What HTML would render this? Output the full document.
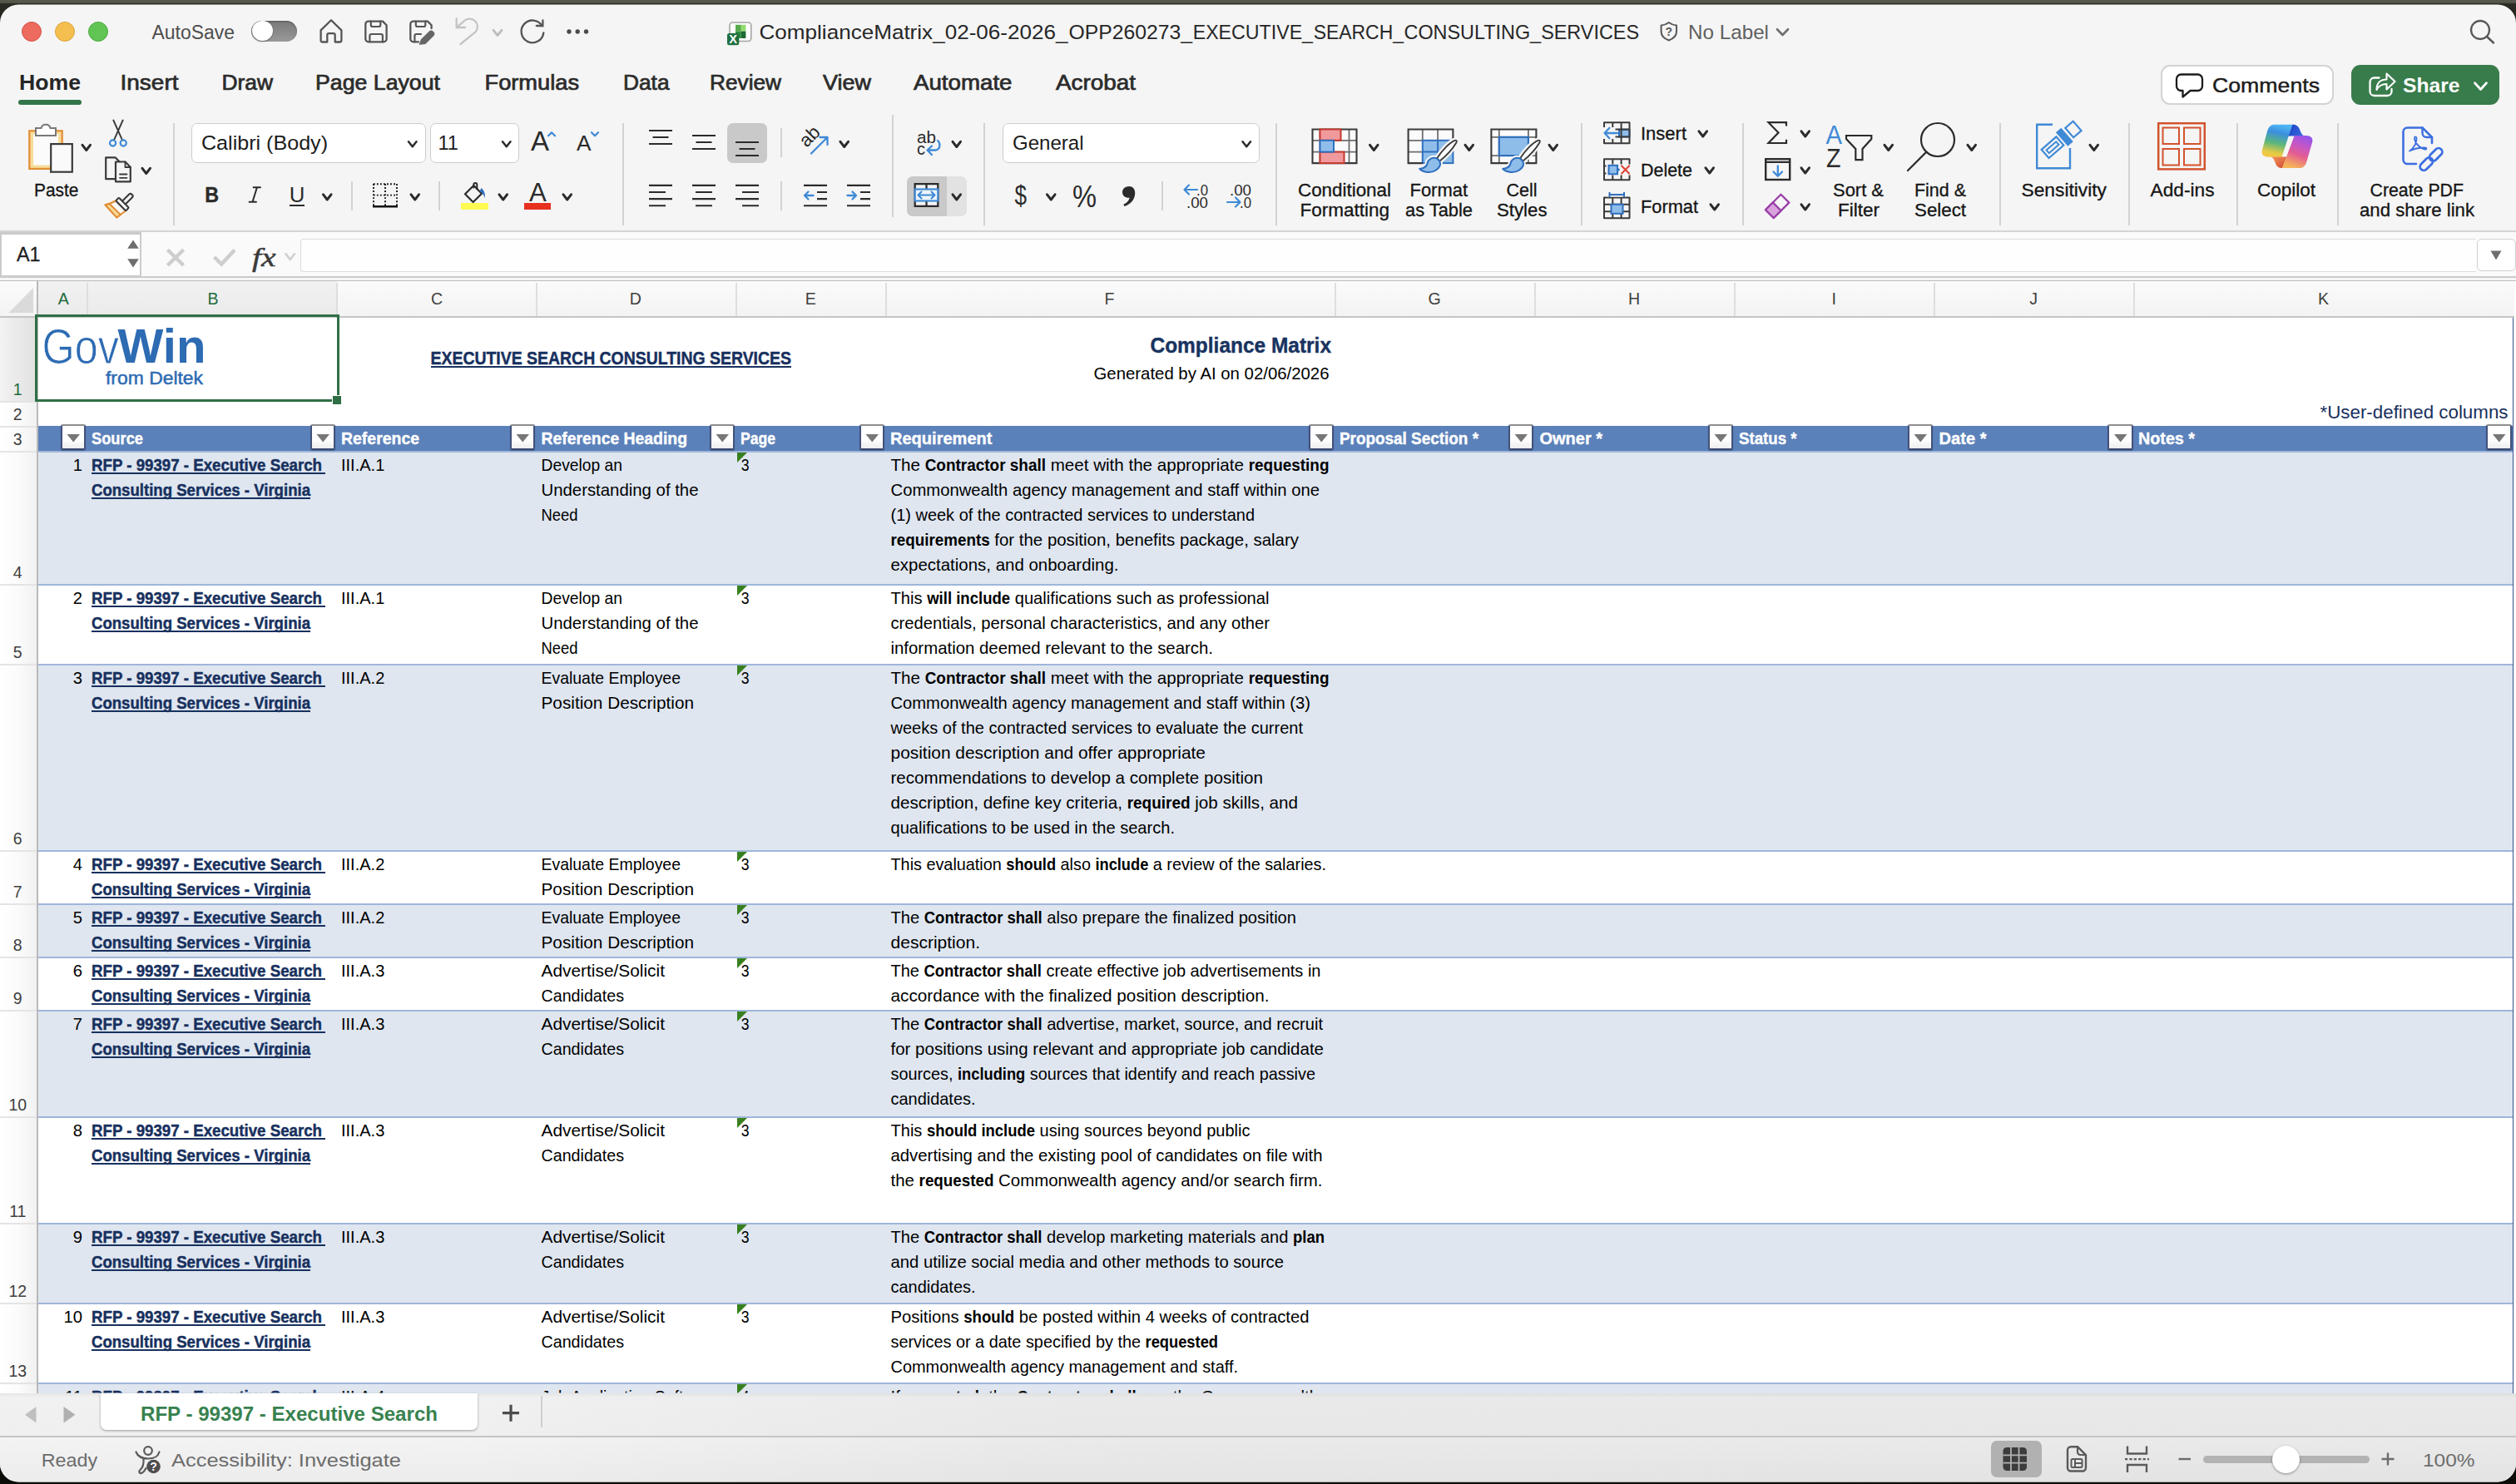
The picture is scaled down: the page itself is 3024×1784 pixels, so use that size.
<!DOCTYPE html>
<html><head><meta charset="utf-8"><title>Excel</title><style>
html,body{margin:0;padding:0}
body{width:3024px;height:1784px;overflow:hidden;position:relative;background:linear-gradient(180deg,#55584a 0px,#55584a 3.2px,#2b2c24 4.6px,#1e2219 30px,#14160f 900px,#0c0d08 1784px);font-family:"Liberation Sans",sans-serif}
#win{position:absolute;left:0;top:0;width:3024px;height:1784px;clip-path:inset(5.5px 0px 2.6px 0px round 22px);background:#f5f5f5;overflow:hidden}
.a{position:absolute;box-sizing:border-box}
svg text{font-family:"Liberation Sans",sans-serif}
</style></head>
<body><div id="win">
<div class="a" style="left:0px;top:338px;width:3024px;height:1337px;background:#fff"></div>
<div class="a" style="left:0px;top:338px;width:3024px;height:42px;background:linear-gradient(180deg,#fbfbfb,#f3f3f3)"></div>
<div class="a" style="left:45px;top:338px;width:360px;height:42px;background:linear-gradient(180deg,#f1f1f1,#ebebeb)"></div>
<div class="a" style="left:0px;top:380px;width:3024px;height:2px;background:#c4c4c4"></div>
<div class="a" style="left:104px;top:340px;width:1.5px;height:40px;background:#dedede"></div>
<div class="a" style="left:404px;top:340px;width:1.5px;height:40px;background:#dedede"></div>
<div class="a" style="left:644px;top:340px;width:1.5px;height:40px;background:#dedede"></div>
<div class="a" style="left:884px;top:340px;width:1.5px;height:40px;background:#dedede"></div>
<div class="a" style="left:1064px;top:340px;width:1.5px;height:40px;background:#dedede"></div>
<div class="a" style="left:1604px;top:340px;width:1.5px;height:40px;background:#dedede"></div>
<div class="a" style="left:1844px;top:340px;width:1.5px;height:40px;background:#dedede"></div>
<div class="a" style="left:2084px;top:340px;width:1.5px;height:40px;background:#dedede"></div>
<div class="a" style="left:2324px;top:340px;width:1.5px;height:40px;background:#dedede"></div>
<div class="a" style="left:2564px;top:340px;width:1.5px;height:40px;background:#dedede"></div>
<div class="a" style="left:3021px;top:338px;width:3px;height:42px;background:#f5f5f5"></div>
<div class="a" style="left:0px;top:382px;width:44px;height:1293px;background:linear-gradient(90deg,#ffffff 0,#fbfbfb 50%,#f1f1f1 100%)"></div>
<div class="a" style="left:0px;top:382px;width:44px;height:100px;background:linear-gradient(90deg,#f3f3f3 0,#ebebeb 40%,#e2e2e2 100%)"></div>
<div class="a" style="left:44px;top:338px;width:2px;height:1337px;background:#b9b9b9"></div>
<div class="a" style="left:0px;top:481.5px;width:44px;height:2px;background:#e4e4e4"></div>
<div class="a" style="left:0px;top:511.5px;width:44px;height:2px;background:#e4e4e4"></div>
<div class="a" style="left:0px;top:541.5px;width:44px;height:2px;background:#e4e4e4"></div>
<div class="a" style="left:0px;top:701.5px;width:44px;height:2px;background:#e4e4e4"></div>
<div class="a" style="left:0px;top:797.5px;width:44px;height:2px;background:#e4e4e4"></div>
<div class="a" style="left:0px;top:1021.5px;width:44px;height:2px;background:#e4e4e4"></div>
<div class="a" style="left:0px;top:1085.5px;width:44px;height:2px;background:#e4e4e4"></div>
<div class="a" style="left:0px;top:1149.5px;width:44px;height:2px;background:#e4e4e4"></div>
<div class="a" style="left:0px;top:1213.5px;width:44px;height:2px;background:#e4e4e4"></div>
<div class="a" style="left:0px;top:1341.5px;width:44px;height:2px;background:#e4e4e4"></div>
<div class="a" style="left:0px;top:1469.5px;width:44px;height:2px;background:#e4e4e4"></div>
<div class="a" style="left:0px;top:1565.5px;width:44px;height:2px;background:#e4e4e4"></div>
<div class="a" style="left:0px;top:1661.5px;width:44px;height:2px;background:#e4e4e4"></div>
<div class="a" style="left:46px;top:512px;width:2974px;height:30.5px;background:#5b81ba"></div>
<div class="a" style="left:46px;top:542px;width:2974px;height:160px;background:#dfe6f0"></div>
<div class="a" style="left:46px;top:798px;width:2974px;height:224px;background:#dfe6f0"></div>
<div class="a" style="left:46px;top:1086px;width:2974px;height:64px;background:#dfe6f0"></div>
<div class="a" style="left:46px;top:1214px;width:2974px;height:128px;background:#dfe6f0"></div>
<div class="a" style="left:46px;top:1470px;width:2974px;height:96px;background:#dfe6f0"></div>
<div class="a" style="left:46px;top:1662px;width:2974px;height:98px;background:#dfe6f0"></div>
<div class="a" style="left:46px;top:541.5px;width:2974px;height:2px;background:#9fb6da"></div>
<div class="a" style="left:46px;top:701.5px;width:2974px;height:2px;background:#9fb6da"></div>
<div class="a" style="left:46px;top:797.5px;width:2974px;height:2px;background:#9fb6da"></div>
<div class="a" style="left:46px;top:1021.5px;width:2974px;height:2px;background:#9fb6da"></div>
<div class="a" style="left:46px;top:1085.5px;width:2974px;height:2px;background:#9fb6da"></div>
<div class="a" style="left:46px;top:1149.5px;width:2974px;height:2px;background:#9fb6da"></div>
<div class="a" style="left:46px;top:1213.5px;width:2974px;height:2px;background:#9fb6da"></div>
<div class="a" style="left:46px;top:1341.5px;width:2974px;height:2px;background:#9fb6da"></div>
<div class="a" style="left:46px;top:1469.5px;width:2974px;height:2px;background:#9fb6da"></div>
<div class="a" style="left:46px;top:1565.5px;width:2974px;height:2px;background:#9fb6da"></div>
<div class="a" style="left:46px;top:1661.5px;width:2974px;height:2px;background:#9fb6da"></div>
<div class="a" style="left:3019.8px;top:382px;width:1.6px;height:1293px;background:#36528f"></div>
<div class="a" style="left:3021.5px;top:338px;width:3px;height:1337px;background:#fff"></div>
<div class="a" style="left:72.5px;top:510px;width:30.5px;height:31px;background:linear-gradient(180deg,#fff 60%,#ededed);border:2px solid;border-color:#8e8e8e #43527a #3b4a72 #43527a;border-radius:2.5px;box-shadow:0 1px 1px rgba(0,0,0,.25)"></div>
<div class="a" style="left:372.5px;top:510px;width:30.5px;height:31px;background:linear-gradient(180deg,#fff 60%,#ededed);border:2px solid;border-color:#8e8e8e #43527a #3b4a72 #43527a;border-radius:2.5px;box-shadow:0 1px 1px rgba(0,0,0,.25)"></div>
<div class="a" style="left:612.5px;top:510px;width:30.5px;height:31px;background:linear-gradient(180deg,#fff 60%,#ededed);border:2px solid;border-color:#8e8e8e #43527a #3b4a72 #43527a;border-radius:2.5px;box-shadow:0 1px 1px rgba(0,0,0,.25)"></div>
<div class="a" style="left:852.5px;top:510px;width:30.5px;height:31px;background:linear-gradient(180deg,#fff 60%,#ededed);border:2px solid;border-color:#8e8e8e #43527a #3b4a72 #43527a;border-radius:2.5px;box-shadow:0 1px 1px rgba(0,0,0,.25)"></div>
<div class="a" style="left:1032.5px;top:510px;width:30.5px;height:31px;background:linear-gradient(180deg,#fff 60%,#ededed);border:2px solid;border-color:#8e8e8e #43527a #3b4a72 #43527a;border-radius:2.5px;box-shadow:0 1px 1px rgba(0,0,0,.25)"></div>
<div class="a" style="left:1572.5px;top:510px;width:30.5px;height:31px;background:linear-gradient(180deg,#fff 60%,#ededed);border:2px solid;border-color:#8e8e8e #43527a #3b4a72 #43527a;border-radius:2.5px;box-shadow:0 1px 1px rgba(0,0,0,.25)"></div>
<div class="a" style="left:1812.5px;top:510px;width:30.5px;height:31px;background:linear-gradient(180deg,#fff 60%,#ededed);border:2px solid;border-color:#8e8e8e #43527a #3b4a72 #43527a;border-radius:2.5px;box-shadow:0 1px 1px rgba(0,0,0,.25)"></div>
<div class="a" style="left:2052.5px;top:510px;width:30.5px;height:31px;background:linear-gradient(180deg,#fff 60%,#ededed);border:2px solid;border-color:#8e8e8e #43527a #3b4a72 #43527a;border-radius:2.5px;box-shadow:0 1px 1px rgba(0,0,0,.25)"></div>
<div class="a" style="left:2292.5px;top:510px;width:30.5px;height:31px;background:linear-gradient(180deg,#fff 60%,#ededed);border:2px solid;border-color:#8e8e8e #43527a #3b4a72 #43527a;border-radius:2.5px;box-shadow:0 1px 1px rgba(0,0,0,.25)"></div>
<div class="a" style="left:2533px;top:510px;width:30.5px;height:31px;background:linear-gradient(180deg,#fff 60%,#ededed);border:2px solid;border-color:#8e8e8e #43527a #3b4a72 #43527a;border-radius:2.5px;box-shadow:0 1px 1px rgba(0,0,0,.25)"></div>
<div class="a" style="left:2988px;top:510px;width:30.5px;height:31px;background:linear-gradient(180deg,#fff 60%,#ededed);border:2px solid;border-color:#8e8e8e #43527a #3b4a72 #43527a;border-radius:2.5px;box-shadow:0 1px 1px rgba(0,0,0,.25)"></div>
<div class="a" style="left:517.5px;top:439.8px;width:433.5px;height:2.3px;background:#17305e"></div>
<div class="a" style="left:42px;top:378.3px;width:365.8px;height:105.2px;border:3.6px solid #2f6f46"></div>
<div class="a" style="left:398.5px;top:474.5px;width:12.5px;height:12.5px;background:#2f6f46;border:1.5px solid #fff"></div>
<div class="a" style="left:110px;top:568.3000000000001px;width:281px;height:2.2px;background:#17305e"></div>
<div class="a" style="left:110px;top:598.3000000000001px;width:263px;height:2.2px;background:#17305e"></div>
<div class="a" style="left:110px;top:728.3000000000001px;width:281px;height:2.2px;background:#17305e"></div>
<div class="a" style="left:110px;top:758.3000000000001px;width:263px;height:2.2px;background:#17305e"></div>
<div class="a" style="left:110px;top:824.3000000000001px;width:281px;height:2.2px;background:#17305e"></div>
<div class="a" style="left:110px;top:854.3000000000001px;width:263px;height:2.2px;background:#17305e"></div>
<div class="a" style="left:110px;top:1048.3px;width:281px;height:2.2px;background:#17305e"></div>
<div class="a" style="left:110px;top:1078.3px;width:263px;height:2.2px;background:#17305e"></div>
<div class="a" style="left:110px;top:1112.3px;width:281px;height:2.2px;background:#17305e"></div>
<div class="a" style="left:110px;top:1142.3px;width:263px;height:2.2px;background:#17305e"></div>
<div class="a" style="left:110px;top:1176.3px;width:281px;height:2.2px;background:#17305e"></div>
<div class="a" style="left:110px;top:1206.3px;width:263px;height:2.2px;background:#17305e"></div>
<div class="a" style="left:110px;top:1240.3px;width:281px;height:2.2px;background:#17305e"></div>
<div class="a" style="left:110px;top:1270.3px;width:263px;height:2.2px;background:#17305e"></div>
<div class="a" style="left:110px;top:1368.3px;width:281px;height:2.2px;background:#17305e"></div>
<div class="a" style="left:110px;top:1398.3px;width:263px;height:2.2px;background:#17305e"></div>
<div class="a" style="left:110px;top:1496.3px;width:281px;height:2.2px;background:#17305e"></div>
<div class="a" style="left:110px;top:1526.3px;width:263px;height:2.2px;background:#17305e"></div>
<div class="a" style="left:110px;top:1592.3px;width:281px;height:2.2px;background:#17305e"></div>
<div class="a" style="left:110px;top:1622.3px;width:263px;height:2.2px;background:#17305e"></div>
<div class="a" style="left:26px;top:26px;width:24px;height:24px;border-radius:50%;background:#ed6a5e;border:1px solid #d5544a"></div>
<div class="a" style="left:66px;top:26px;width:24px;height:24px;border-radius:50%;background:#f5bf4f;border:1px solid #d9a33c"></div>
<div class="a" style="left:106px;top:26px;width:24px;height:24px;border-radius:50%;background:#61c554;border:1px solid #4fa942"></div>
<div class="a" style="left:302px;top:24.5px;width:55px;height:25px;border-radius:13px;background:linear-gradient(180deg,#787878,#8c8c8c 60%,#9a9a9a);box-shadow:inset 0 1px 2px rgba(0,0,0,.3)"></div>
<div class="a" style="left:303px;top:25px;width:24.5px;height:24px;border-radius:50%;background:#fff;box-shadow:0 1px 2px rgba(0,0,0,.35)"></div>
<div class="a" style="left:22px;top:120px;width:76px;height:6px;border-radius:3px;background:#347449"></div>
<div class="a" style="left:2596.5px;top:78px;width:208.5px;height:47.5px;border-radius:11px;background:#fff;border:2px solid #d3d3d3"></div>
<div class="a" style="left:2826px;top:78px;width:178px;height:48px;border-radius:11px;background:#387c4b"></div>
<div class="a" style="left:230px;top:148px;width:281.5px;height:47.5px;border-radius:7px;background:#fff;border:1.5px solid #cdcdcd"></div>
<div class="a" style="left:516.5px;top:148px;width:107.5px;height:47.5px;border-radius:7px;background:#fff;border:1.5px solid #cdcdcd"></div>
<div class="a" style="left:1204.5px;top:148px;width:309.5px;height:47.5px;border-radius:7px;background:#fff;border:1.5px solid #cdcdcd"></div>
<div class="a" style="left:874px;top:148px;width:47.5px;height:47.5px;border-radius:7px;background:#c9c9c9"></div>
<div class="a" style="left:1090px;top:212px;width:72px;height:47.5px;border-radius:7px;background:#e2e2e2"></div>
<div class="a" style="left:1090px;top:212px;width:48px;height:47.5px;border-radius:7px 0 0 7px;background:#c9c9c9"></div>
<div class="a" style="left:208px;top:148px;width:2px;height:123px;background:#d2d2d2"></div>
<div class="a" style="left:748px;top:148px;width:2px;height:123px;background:#d2d2d2"></div>
<div class="a" style="left:1182px;top:148px;width:2px;height:123px;background:#d2d2d2"></div>
<div class="a" style="left:1533px;top:148px;width:2px;height:123px;background:#d2d2d2"></div>
<div class="a" style="left:1900px;top:148px;width:2px;height:123px;background:#d2d2d2"></div>
<div class="a" style="left:2094px;top:148px;width:2px;height:123px;background:#d2d2d2"></div>
<div class="a" style="left:2403px;top:148px;width:2px;height:123px;background:#d2d2d2"></div>
<div class="a" style="left:2557.5px;top:148px;width:2px;height:123px;background:#d2d2d2"></div>
<div class="a" style="left:2687.5px;top:148px;width:2px;height:123px;background:#d2d2d2"></div>
<div class="a" style="left:2809px;top:148px;width:2px;height:123px;background:#d2d2d2"></div>
<div class="a" style="left:1072px;top:138px;width:2px;height:123px;background:#d2d2d2"></div>
<div class="a" style="left:421.5px;top:218px;width:2px;height:35px;background:#d2d2d2"></div>
<div class="a" style="left:527px;top:218px;width:2px;height:35px;background:#d2d2d2"></div>
<div class="a" style="left:938px;top:218px;width:2px;height:35px;background:#d2d2d2"></div>
<div class="a" style="left:1396px;top:218px;width:2px;height:35px;background:#d2d2d2"></div>
<div class="a" style="left:938px;top:154px;width:2px;height:35px;background:#d2d2d2"></div>
<div class="a" style="left:347.8px;top:246px;width:18.4px;height:2px;background:#2b2b2b"></div>
<div class="a" style="left:630.3px;top:244.2px;width:31.8px;height:7.7px;background:#e8301f"></div>
<div class="a" style="left:554px;top:244.2px;width:32.5px;height:7.7px;background:#fdfb52"></div>
<div class="a" style="left:0px;top:277px;width:3024px;height:2px;background:#d4d4d4"></div>
<div class="a" style="left:0px;top:279px;width:3024px;height:53.5px;background:#fafafa"></div>
<div class="a" style="left:0px;top:279px;width:170px;height:54px;background:#cbcbcb"></div>
<div class="a" style="left:1.8px;top:282px;width:166.4px;height:48.6px;background:#fff"></div>
<div class="a" style="left:361px;top:287px;width:2615px;height:39.5px;background:#fefefe;border:1.5px solid #dcdcdc;border-right:none;border-radius:4px 0 0 4px"></div>
<div class="a" style="left:2976.5px;top:287px;width:47.5px;height:38.5px;background:#fff;border:1.5px solid #d0d0d0;border-radius:6px"></div>
<div class="a" style="left:0px;top:332px;width:3024px;height:2px;background:#cbcbcb"></div>
<div class="a" style="left:0px;top:334px;width:3024px;height:2.5px;background:#f6f6f6"></div>
<div class="a" style="left:0px;top:336.5px;width:3024px;height:1.5px;background:#bcbcbc"></div>
<div class="a" style="left:0px;top:1674.5px;width:3024px;height:52px;background:linear-gradient(90deg,rgba(0,0,0,0) 18%,rgba(0,0,0,.03) 42%,rgba(0,0,0,.035) 100%),linear-gradient(180deg,#e6e6e6 0,#f1f1f1 5px,#efefef 100%)"></div>
<div class="a" style="left:121px;top:1674.5px;width:453px;height:44px;background:#fff;border-radius:0 0 7px 7px;box-shadow:0 1px 3px rgba(0,0,0,.35)"></div>
<div class="a" style="left:650px;top:1678px;width:1.5px;height:38px;background:#cfcfcf"></div>
<div class="a" style="left:0px;top:1726px;width:3024px;height:2px;background:#c5c5c5"></div>
<div class="a" style="left:0px;top:1728px;width:3024px;height:56px;background:linear-gradient(90deg,rgba(0,0,0,0) 18%,rgba(0,0,0,.035) 42%,rgba(0,0,0,.04) 100%),linear-gradient(180deg,#f3f3f3,#ececec)"></div>
<div class="a" style="left:2392.5px;top:1732px;width:61.5px;height:43.5px;border-radius:7px;background:#b1b1b1"></div>
<div class="a" style="left:2648px;top:1750px;width:199.5px;height:9px;border-radius:5px;background:#b3b3b3"></div>
<div class="a" style="left:2731px;top:1737.5px;width:33px;height:33px;border-radius:50%;background:#fff;box-shadow:0 1px 3px rgba(0,0,0,.4)"></div>
<svg class="a" style="left:0;top:0" width="3024" height="1784" viewBox="0 0 3024 1784">
<text x="76.4" y="365.8" font-size="19.6" fill="#1f6b3c" text-anchor="middle"  xml:space="preserve">A</text>
<text x="256.1" y="365.8" font-size="19.6" fill="#1f6b3c" text-anchor="middle"  xml:space="preserve">B</text>
<text x="525.2" y="365.8" font-size="19.6" fill="#404040" text-anchor="middle"  xml:space="preserve">C</text>
<text x="763.8" y="365.8" font-size="19.6" fill="#404040" text-anchor="middle"  xml:space="preserve">D</text>
<text x="974.2" y="365.8" font-size="19.6" fill="#404040" text-anchor="middle"  xml:space="preserve">E</text>
<text x="1333.5" y="365.8" font-size="19.6" fill="#404040" text-anchor="middle"  xml:space="preserve">F</text>
<text x="1724.1" y="365.8" font-size="19.6" fill="#404040" text-anchor="middle"  xml:space="preserve">G</text>
<text x="1964.0" y="365.8" font-size="19.6" fill="#404040" text-anchor="middle"  xml:space="preserve">H</text>
<text x="2204.3" y="365.8" font-size="19.6" fill="#404040" text-anchor="middle"  xml:space="preserve">I</text>
<text x="2444.1" y="365.8" font-size="19.6" fill="#404040" text-anchor="middle"  xml:space="preserve">J</text>
<text x="2792.6" y="365.8" font-size="19.6" fill="#404040" text-anchor="middle"  xml:space="preserve">K</text>
<path d="M40 346 L40 376 L10.5 376 Z" fill="#dadada"/>
<text x="21.3" y="475.3" font-size="19.5" fill="#1f6b3c" text-anchor="middle"  xml:space="preserve">1</text>
<text x="21.3" y="505.3" font-size="19.5" fill="#404040" text-anchor="middle"  xml:space="preserve">2</text>
<text x="21.3" y="535.3" font-size="19.5" fill="#404040" text-anchor="middle"  xml:space="preserve">3</text>
<text x="21.3" y="695.3" font-size="19.5" fill="#404040" text-anchor="middle"  xml:space="preserve">4</text>
<text x="21.3" y="791.3" font-size="19.5" fill="#404040" text-anchor="middle"  xml:space="preserve">5</text>
<text x="21.3" y="1015.3" font-size="19.5" fill="#404040" text-anchor="middle"  xml:space="preserve">6</text>
<text x="21.3" y="1079.3" font-size="19.5" fill="#404040" text-anchor="middle"  xml:space="preserve">7</text>
<text x="21.3" y="1143.3" font-size="19.5" fill="#404040" text-anchor="middle"  xml:space="preserve">8</text>
<text x="21.3" y="1207.3" font-size="19.5" fill="#404040" text-anchor="middle"  xml:space="preserve">9</text>
<text x="21.3" y="1335.3" font-size="19.5" fill="#404040" text-anchor="middle"  xml:space="preserve">10</text>
<text x="21.3" y="1463.3" font-size="19.5" fill="#404040" text-anchor="middle"  xml:space="preserve">11</text>
<text x="21.3" y="1559.3" font-size="19.5" fill="#404040" text-anchor="middle"  xml:space="preserve">12</text>
<text x="21.3" y="1655.3" font-size="19.5" fill="#404040" text-anchor="middle"  xml:space="preserve">13</text>
<text x="110" y="534" font-size="20.5" fill="#fff" textLength="62" lengthAdjust="spacingAndGlyphs" font-weight="bold" stroke="#fff" stroke-width="0.4" xml:space="preserve">Source</text>
<text x="410" y="534" font-size="20.5" fill="#fff" textLength="94" lengthAdjust="spacingAndGlyphs" font-weight="bold" stroke="#fff" stroke-width="0.4" xml:space="preserve">Reference</text>
<text x="650.5" y="534" font-size="20.5" fill="#fff" textLength="175.5" lengthAdjust="spacingAndGlyphs" font-weight="bold" stroke="#fff" stroke-width="0.4" xml:space="preserve">Reference Heading</text>
<text x="890" y="534" font-size="20.5" fill="#fff" textLength="42" lengthAdjust="spacingAndGlyphs" font-weight="bold" stroke="#fff" stroke-width="0.4" xml:space="preserve">Page</text>
<text x="1070" y="534" font-size="20.5" fill="#fff" textLength="122.5" lengthAdjust="spacingAndGlyphs" font-weight="bold" stroke="#fff" stroke-width="0.4" xml:space="preserve">Requirement</text>
<text x="1610" y="534" font-size="20.5" fill="#fff" textLength="167" lengthAdjust="spacingAndGlyphs" font-weight="bold" stroke="#fff" stroke-width="0.4" xml:space="preserve">Proposal Section *</text>
<text x="1850.5" y="534" font-size="20.5" fill="#fff" textLength="75.5" lengthAdjust="spacingAndGlyphs" font-weight="bold" stroke="#fff" stroke-width="0.4" xml:space="preserve">Owner *</text>
<text x="2090" y="534" font-size="20.5" fill="#fff" textLength="69.5" lengthAdjust="spacingAndGlyphs" font-weight="bold" stroke="#fff" stroke-width="0.4" xml:space="preserve">Status *</text>
<text x="2330.5" y="534" font-size="20.5" fill="#fff" textLength="57" lengthAdjust="spacingAndGlyphs" font-weight="bold" stroke="#fff" stroke-width="0.4" xml:space="preserve">Date *</text>
<text x="2570" y="534" font-size="20.5" fill="#fff" textLength="68" lengthAdjust="spacingAndGlyphs" font-weight="bold" stroke="#fff" stroke-width="0.4" xml:space="preserve">Notes *</text>
<path d="M80.5 522 L96.0 522 L88.25 531.5 Z" fill="#777"/>
<path d="M380.5 522 L396.0 522 L388.25 531.5 Z" fill="#777"/>
<path d="M620.5 522 L636.0 522 L628.25 531.5 Z" fill="#777"/>
<path d="M860.5 522 L876.0 522 L868.25 531.5 Z" fill="#777"/>
<path d="M1040.5 522 L1056.0 522 L1048.25 531.5 Z" fill="#777"/>
<path d="M1580.5 522 L1596.0 522 L1588.25 531.5 Z" fill="#777"/>
<path d="M1820.5 522 L1836.0 522 L1828.25 531.5 Z" fill="#777"/>
<path d="M2060.5 522 L2076.0 522 L2068.25 531.5 Z" fill="#777"/>
<path d="M2300.5 522 L2316.0 522 L2308.25 531.5 Z" fill="#777"/>
<path d="M2541 522 L2556.5 522 L2548.75 531.5 Z" fill="#777"/>
<path d="M2996 522 L3011.5 522 L3003.75 531.5 Z" fill="#777"/>
<text x="517.5" y="438" font-size="21.7" fill="#17305e" textLength="433.5" lengthAdjust="spacingAndGlyphs" font-weight="bold" stroke="#17305e" stroke-width="0.45" xml:space="preserve">EXECUTIVE SEARCH CONSULTING SERVICES</text>
<text x="1382.5" y="424" font-size="25.3" fill="#18335f" textLength="217.5" lengthAdjust="spacingAndGlyphs" font-weight="bold" stroke="#18335f" stroke-width="0.4" xml:space="preserve">Compliance Matrix</text>
<text x="1314.5" y="455.5" font-size="20.2" fill="#000" textLength="283" lengthAdjust="spacingAndGlyphs"  xml:space="preserve">Generated by AI on 02/06/2026</text>
<text x="2788.5" y="502.8" font-size="21.7" fill="#17305e" textLength="226" lengthAdjust="spacingAndGlyphs"  xml:space="preserve">*User-defined columns</text>
<text x="50.5" y="437" font-size="59.5" fill="#2d6bb3" textLength="92.5" lengthAdjust="spacingAndGlyphs" stroke="#fff" stroke-width="0.9" paint-order="fill" xml:space="preserve">Gov</text>
<text x="141.5" y="436.3" font-size="57.3" fill="#2d6bb3" textLength="106" lengthAdjust="spacingAndGlyphs" font-weight="bold"  xml:space="preserve">Win</text>
<text x="127" y="462" font-size="22.5" fill="#2d6bb3" textLength="117" lengthAdjust="spacingAndGlyphs" stroke="#2d6bb3" stroke-width="0.5" xml:space="preserve">from Deltek</text>
<clipPath id="shc"><rect x="0" y="382" width="3024" height="1292.5"/></clipPath><g clip-path="url(#shc)">
<text x="99" y="565.7" font-size="20.2" fill="#000" text-anchor="end"  xml:space="preserve">1</text>
<text x="110" y="565.7" font-size="20.2" fill="#17305e" textLength="277" lengthAdjust="spacingAndGlyphs" font-weight="bold" stroke="#17305e" stroke-width="0.45" xml:space="preserve">RFP - 99397 - Executive Search</text>
<text x="110" y="595.7" font-size="20.2" fill="#17305e" textLength="263" lengthAdjust="spacingAndGlyphs" font-weight="bold" stroke="#17305e" stroke-width="0.45" xml:space="preserve">Consulting Services - Virginia</text>
<text x="410" y="565.7" font-size="20.2" fill="#000" textLength="52.3" lengthAdjust="spacingAndGlyphs"  xml:space="preserve">III.A.1</text>
<text x="650.5" y="565.7" font-size="20.2" fill="#000" textLength="97.5" lengthAdjust="spacingAndGlyphs"  xml:space="preserve">Develop an</text>
<text x="650.5" y="595.7" font-size="20.2" fill="#000" textLength="189" lengthAdjust="spacingAndGlyphs"  xml:space="preserve">Understanding of the</text>
<text x="650.5" y="625.7" font-size="20.2" fill="#000" textLength="44" lengthAdjust="spacingAndGlyphs"  xml:space="preserve">Need</text>
<text x="890.8" y="565.7" font-size="20.2" fill="#000" textLength="9.8" lengthAdjust="spacingAndGlyphs"  xml:space="preserve">3</text>
<path d="M886 544.1 L898 544.1 L886 555.9 Z" fill="#38801f"/>
<text x="1070.5" y="565.7" font-size="20.2" fill="#000" textLength="41.19" lengthAdjust="spacingAndGlyphs"  xml:space="preserve">The </text>
<text x="1111.69" y="565.7" font-size="20.2" fill="#000" textLength="145.27" lengthAdjust="spacingAndGlyphs" font-weight="bold"  xml:space="preserve">Contractor shall</text>
<text x="1256.95" y="565.7" font-size="20.2" fill="#000" textLength="243.7" lengthAdjust="spacingAndGlyphs"  xml:space="preserve"> meet with the appropriate </text>
<text x="1500.66" y="565.7" font-size="20.2" fill="#000" textLength="96.84" lengthAdjust="spacingAndGlyphs" font-weight="bold"  xml:space="preserve">requesting</text>
<text x="1070.5" y="595.7" font-size="20.2" fill="#000" textLength="515.5" lengthAdjust="spacingAndGlyphs"  xml:space="preserve">Commonwealth agency management and staff within one</text>
<text x="1070.5" y="625.7" font-size="20.2" fill="#000" textLength="437.5" lengthAdjust="spacingAndGlyphs"  xml:space="preserve">(1) week of the contracted services to understand</text>
<text x="1070.5" y="655.7" font-size="20.2" fill="#000" textLength="119.13" lengthAdjust="spacingAndGlyphs" font-weight="bold"  xml:space="preserve">requirements</text>
<text x="1189.63" y="655.7" font-size="20.2" fill="#000" textLength="371.37" lengthAdjust="spacingAndGlyphs"  xml:space="preserve"> for the position, benefits package, salary</text>
<text x="1070.5" y="685.7" font-size="20.2" fill="#000" textLength="274" lengthAdjust="spacingAndGlyphs"  xml:space="preserve">expectations, and onboarding.</text>
<text x="99" y="725.7" font-size="20.2" fill="#000" text-anchor="end"  xml:space="preserve">2</text>
<text x="110" y="725.7" font-size="20.2" fill="#17305e" textLength="277" lengthAdjust="spacingAndGlyphs" font-weight="bold" stroke="#17305e" stroke-width="0.45" xml:space="preserve">RFP - 99397 - Executive Search</text>
<text x="110" y="755.7" font-size="20.2" fill="#17305e" textLength="263" lengthAdjust="spacingAndGlyphs" font-weight="bold" stroke="#17305e" stroke-width="0.45" xml:space="preserve">Consulting Services - Virginia</text>
<text x="410" y="725.7" font-size="20.2" fill="#000" textLength="52.3" lengthAdjust="spacingAndGlyphs"  xml:space="preserve">III.A.1</text>
<text x="650.5" y="725.7" font-size="20.2" fill="#000" textLength="97.5" lengthAdjust="spacingAndGlyphs"  xml:space="preserve">Develop an</text>
<text x="650.5" y="755.7" font-size="20.2" fill="#000" textLength="189" lengthAdjust="spacingAndGlyphs"  xml:space="preserve">Understanding of the</text>
<text x="650.5" y="785.7" font-size="20.2" fill="#000" textLength="44" lengthAdjust="spacingAndGlyphs"  xml:space="preserve">Need</text>
<text x="890.8" y="725.7" font-size="20.2" fill="#000" textLength="9.8" lengthAdjust="spacingAndGlyphs"  xml:space="preserve">3</text>
<path d="M886 704.1 L898 704.1 L886 715.9 Z" fill="#38801f"/>
<text x="1070.5" y="725.7" font-size="20.2" fill="#000" textLength="43.66" lengthAdjust="spacingAndGlyphs"  xml:space="preserve">This </text>
<text x="1114.16" y="725.7" font-size="20.2" fill="#000" textLength="99.95" lengthAdjust="spacingAndGlyphs" font-weight="bold"  xml:space="preserve">will include</text>
<text x="1214.12" y="725.7" font-size="20.2" fill="#000" textLength="311.38" lengthAdjust="spacingAndGlyphs"  xml:space="preserve"> qualifications such as professional</text>
<text x="1070.5" y="755.7" font-size="20.2" fill="#000" textLength="455.5" lengthAdjust="spacingAndGlyphs"  xml:space="preserve">credentials, personal characteristics, and any other</text>
<text x="1070.5" y="785.7" font-size="20.2" fill="#000" textLength="387.5" lengthAdjust="spacingAndGlyphs"  xml:space="preserve">information deemed relevant to the search.</text>
<text x="99" y="821.7" font-size="20.2" fill="#000" text-anchor="end"  xml:space="preserve">3</text>
<text x="110" y="821.7" font-size="20.2" fill="#17305e" textLength="277" lengthAdjust="spacingAndGlyphs" font-weight="bold" stroke="#17305e" stroke-width="0.45" xml:space="preserve">RFP - 99397 - Executive Search</text>
<text x="110" y="851.7" font-size="20.2" fill="#17305e" textLength="263" lengthAdjust="spacingAndGlyphs" font-weight="bold" stroke="#17305e" stroke-width="0.45" xml:space="preserve">Consulting Services - Virginia</text>
<text x="410" y="821.7" font-size="20.2" fill="#000" textLength="52.3" lengthAdjust="spacingAndGlyphs"  xml:space="preserve">III.A.2</text>
<text x="650.5" y="821.7" font-size="20.2" fill="#000" textLength="167.5" lengthAdjust="spacingAndGlyphs"  xml:space="preserve">Evaluate Employee</text>
<text x="650.5" y="851.7" font-size="20.2" fill="#000" textLength="183.5" lengthAdjust="spacingAndGlyphs"  xml:space="preserve">Position Description</text>
<text x="890.8" y="821.7" font-size="20.2" fill="#000" textLength="9.8" lengthAdjust="spacingAndGlyphs"  xml:space="preserve">3</text>
<path d="M886 800.1 L898 800.1 L886 811.9 Z" fill="#38801f"/>
<text x="1070.5" y="821.7" font-size="20.2" fill="#000" textLength="41.19" lengthAdjust="spacingAndGlyphs"  xml:space="preserve">The </text>
<text x="1111.69" y="821.7" font-size="20.2" fill="#000" textLength="145.27" lengthAdjust="spacingAndGlyphs" font-weight="bold"  xml:space="preserve">Contractor shall</text>
<text x="1256.95" y="821.7" font-size="20.2" fill="#000" textLength="243.7" lengthAdjust="spacingAndGlyphs"  xml:space="preserve"> meet with the appropriate </text>
<text x="1500.66" y="821.7" font-size="20.2" fill="#000" textLength="96.84" lengthAdjust="spacingAndGlyphs" font-weight="bold"  xml:space="preserve">requesting</text>
<text x="1070.5" y="851.7" font-size="20.2" fill="#000" textLength="504.5" lengthAdjust="spacingAndGlyphs"  xml:space="preserve">Commonwealth agency management and staff within (3)</text>
<text x="1070.5" y="881.7" font-size="20.2" fill="#000" textLength="495.5" lengthAdjust="spacingAndGlyphs"  xml:space="preserve">weeks of the contracted services to evaluate the current</text>
<text x="1070.5" y="911.7" font-size="20.2" fill="#000" textLength="378.5" lengthAdjust="spacingAndGlyphs"  xml:space="preserve">position description and offer appropriate</text>
<text x="1070.5" y="941.7" font-size="20.2" fill="#000" textLength="447.5" lengthAdjust="spacingAndGlyphs"  xml:space="preserve">recommendations to develop a complete position</text>
<text x="1070.5" y="971.7" font-size="20.2" fill="#000" textLength="284.13" lengthAdjust="spacingAndGlyphs"  xml:space="preserve">description, define key criteria, </text>
<text x="1354.63" y="971.7" font-size="20.2" fill="#000" textLength="75.91" lengthAdjust="spacingAndGlyphs" font-weight="bold"  xml:space="preserve">required</text>
<text x="1430.54" y="971.7" font-size="20.2" fill="#000" textLength="129.46" lengthAdjust="spacingAndGlyphs"  xml:space="preserve"> job skills, and</text>
<text x="1070.5" y="1001.7" font-size="20.2" fill="#000" textLength="341.5" lengthAdjust="spacingAndGlyphs"  xml:space="preserve">qualifications to be used in the search.</text>
<text x="99" y="1045.7" font-size="20.2" fill="#000" text-anchor="end"  xml:space="preserve">4</text>
<text x="110" y="1045.7" font-size="20.2" fill="#17305e" textLength="277" lengthAdjust="spacingAndGlyphs" font-weight="bold" stroke="#17305e" stroke-width="0.45" xml:space="preserve">RFP - 99397 - Executive Search</text>
<text x="110" y="1075.7" font-size="20.2" fill="#17305e" textLength="263" lengthAdjust="spacingAndGlyphs" font-weight="bold" stroke="#17305e" stroke-width="0.45" xml:space="preserve">Consulting Services - Virginia</text>
<text x="410" y="1045.7" font-size="20.2" fill="#000" textLength="52.3" lengthAdjust="spacingAndGlyphs"  xml:space="preserve">III.A.2</text>
<text x="650.5" y="1045.7" font-size="20.2" fill="#000" textLength="167.5" lengthAdjust="spacingAndGlyphs"  xml:space="preserve">Evaluate Employee</text>
<text x="650.5" y="1075.7" font-size="20.2" fill="#000" textLength="183.5" lengthAdjust="spacingAndGlyphs"  xml:space="preserve">Position Description</text>
<text x="890.8" y="1045.7" font-size="20.2" fill="#000" textLength="9.8" lengthAdjust="spacingAndGlyphs"  xml:space="preserve">3</text>
<path d="M886 1024.1 L898 1024.1 L886 1035.9 Z" fill="#38801f"/>
<text x="1070.5" y="1045.7" font-size="20.2" fill="#000" textLength="138.81" lengthAdjust="spacingAndGlyphs"  xml:space="preserve">This evaluation </text>
<text x="1209.31" y="1045.7" font-size="20.2" fill="#000" textLength="59.78" lengthAdjust="spacingAndGlyphs" font-weight="bold"  xml:space="preserve">should</text>
<text x="1269.09" y="1045.7" font-size="20.2" fill="#000" textLength="47.37" lengthAdjust="spacingAndGlyphs"  xml:space="preserve"> also </text>
<text x="1316.45" y="1045.7" font-size="20.2" fill="#000" textLength="63.85" lengthAdjust="spacingAndGlyphs" font-weight="bold"  xml:space="preserve">include</text>
<text x="1380.31" y="1045.7" font-size="20.2" fill="#000" textLength="213.69" lengthAdjust="spacingAndGlyphs"  xml:space="preserve"> a review of the salaries.</text>
<text x="99" y="1109.7" font-size="20.2" fill="#000" text-anchor="end"  xml:space="preserve">5</text>
<text x="110" y="1109.7" font-size="20.2" fill="#17305e" textLength="277" lengthAdjust="spacingAndGlyphs" font-weight="bold" stroke="#17305e" stroke-width="0.45" xml:space="preserve">RFP - 99397 - Executive Search</text>
<text x="110" y="1139.7" font-size="20.2" fill="#17305e" textLength="263" lengthAdjust="spacingAndGlyphs" font-weight="bold" stroke="#17305e" stroke-width="0.45" xml:space="preserve">Consulting Services - Virginia</text>
<text x="410" y="1109.7" font-size="20.2" fill="#000" textLength="52.3" lengthAdjust="spacingAndGlyphs"  xml:space="preserve">III.A.2</text>
<text x="650.5" y="1109.7" font-size="20.2" fill="#000" textLength="167.5" lengthAdjust="spacingAndGlyphs"  xml:space="preserve">Evaluate Employee</text>
<text x="650.5" y="1139.7" font-size="20.2" fill="#000" textLength="183.5" lengthAdjust="spacingAndGlyphs"  xml:space="preserve">Position Description</text>
<text x="890.8" y="1109.7" font-size="20.2" fill="#000" textLength="9.8" lengthAdjust="spacingAndGlyphs"  xml:space="preserve">3</text>
<path d="M886 1088.1 L898 1088.1 L886 1099.9 Z" fill="#38801f"/>
<text x="1070.5" y="1109.7" font-size="20.2" fill="#000" textLength="40.25" lengthAdjust="spacingAndGlyphs"  xml:space="preserve">The </text>
<text x="1110.75" y="1109.7" font-size="20.2" fill="#000" textLength="141.97" lengthAdjust="spacingAndGlyphs" font-weight="bold"  xml:space="preserve">Contractor shall</text>
<text x="1252.72" y="1109.7" font-size="20.2" fill="#000" textLength="305.28" lengthAdjust="spacingAndGlyphs"  xml:space="preserve"> also prepare the finalized position</text>
<text x="1070.5" y="1139.7" font-size="20.2" fill="#000" textLength="107.5" lengthAdjust="spacingAndGlyphs"  xml:space="preserve">description.</text>
<text x="99" y="1173.7" font-size="20.2" fill="#000" text-anchor="end"  xml:space="preserve">6</text>
<text x="110" y="1173.7" font-size="20.2" fill="#17305e" textLength="277" lengthAdjust="spacingAndGlyphs" font-weight="bold" stroke="#17305e" stroke-width="0.45" xml:space="preserve">RFP - 99397 - Executive Search</text>
<text x="110" y="1203.7" font-size="20.2" fill="#17305e" textLength="263" lengthAdjust="spacingAndGlyphs" font-weight="bold" stroke="#17305e" stroke-width="0.45" xml:space="preserve">Consulting Services - Virginia</text>
<text x="410" y="1173.7" font-size="20.2" fill="#000" textLength="52.3" lengthAdjust="spacingAndGlyphs"  xml:space="preserve">III.A.3</text>
<text x="650.5" y="1173.7" font-size="20.2" fill="#000" textLength="148.5" lengthAdjust="spacingAndGlyphs"  xml:space="preserve">Advertise/Solicit</text>
<text x="650.5" y="1203.7" font-size="20.2" fill="#000" textLength="99.5" lengthAdjust="spacingAndGlyphs"  xml:space="preserve">Candidates</text>
<text x="890.8" y="1173.7" font-size="20.2" fill="#000" textLength="9.8" lengthAdjust="spacingAndGlyphs"  xml:space="preserve">3</text>
<path d="M886 1152.1 L898 1152.1 L886 1163.9 Z" fill="#38801f"/>
<text x="1070.5" y="1173.7" font-size="20.2" fill="#000" textLength="40.06" lengthAdjust="spacingAndGlyphs"  xml:space="preserve">The </text>
<text x="1110.56" y="1173.7" font-size="20.2" fill="#000" textLength="141.28" lengthAdjust="spacingAndGlyphs" font-weight="bold"  xml:space="preserve">Contractor shall</text>
<text x="1251.84" y="1173.7" font-size="20.2" fill="#000" textLength="335.66" lengthAdjust="spacingAndGlyphs"  xml:space="preserve"> create effective job advertisements in</text>
<text x="1070.5" y="1203.7" font-size="20.2" fill="#000" textLength="455" lengthAdjust="spacingAndGlyphs"  xml:space="preserve">accordance with the finalized position description.</text>
<text x="99" y="1237.7" font-size="20.2" fill="#000" text-anchor="end"  xml:space="preserve">7</text>
<text x="110" y="1237.7" font-size="20.2" fill="#17305e" textLength="277" lengthAdjust="spacingAndGlyphs" font-weight="bold" stroke="#17305e" stroke-width="0.45" xml:space="preserve">RFP - 99397 - Executive Search</text>
<text x="110" y="1267.7" font-size="20.2" fill="#17305e" textLength="263" lengthAdjust="spacingAndGlyphs" font-weight="bold" stroke="#17305e" stroke-width="0.45" xml:space="preserve">Consulting Services - Virginia</text>
<text x="410" y="1237.7" font-size="20.2" fill="#000" textLength="52.3" lengthAdjust="spacingAndGlyphs"  xml:space="preserve">III.A.3</text>
<text x="650.5" y="1237.7" font-size="20.2" fill="#000" textLength="148.5" lengthAdjust="spacingAndGlyphs"  xml:space="preserve">Advertise/Solicit</text>
<text x="650.5" y="1267.7" font-size="20.2" fill="#000" textLength="99.5" lengthAdjust="spacingAndGlyphs"  xml:space="preserve">Candidates</text>
<text x="890.8" y="1237.7" font-size="20.2" fill="#000" textLength="9.8" lengthAdjust="spacingAndGlyphs"  xml:space="preserve">3</text>
<path d="M886 1216.1 L898 1216.1 L886 1227.9 Z" fill="#38801f"/>
<text x="1070.5" y="1237.7" font-size="20.2" fill="#000" textLength="40.22" lengthAdjust="spacingAndGlyphs"  xml:space="preserve">The </text>
<text x="1110.72" y="1237.7" font-size="20.2" fill="#000" textLength="141.87" lengthAdjust="spacingAndGlyphs" font-weight="bold"  xml:space="preserve">Contractor shall</text>
<text x="1252.6" y="1237.7" font-size="20.2" fill="#000" textLength="337.4" lengthAdjust="spacingAndGlyphs"  xml:space="preserve"> advertise, market, source, and recruit</text>
<text x="1070.5" y="1267.7" font-size="20.2" fill="#000" textLength="520.5" lengthAdjust="spacingAndGlyphs"  xml:space="preserve">for positions using relevant and appropriate job candidate</text>
<text x="1070.5" y="1297.7" font-size="20.2" fill="#000" textLength="80.55" lengthAdjust="spacingAndGlyphs"  xml:space="preserve">sources, </text>
<text x="1151.05" y="1297.7" font-size="20.2" fill="#000" textLength="81.2" lengthAdjust="spacingAndGlyphs" font-weight="bold"  xml:space="preserve">including</text>
<text x="1232.26" y="1297.7" font-size="20.2" fill="#000" textLength="348.74" lengthAdjust="spacingAndGlyphs"  xml:space="preserve"> sources that identify and reach passive</text>
<text x="1070.5" y="1327.7" font-size="20.2" fill="#000" textLength="102" lengthAdjust="spacingAndGlyphs"  xml:space="preserve">candidates.</text>
<text x="99" y="1365.7" font-size="20.2" fill="#000" text-anchor="end"  xml:space="preserve">8</text>
<text x="110" y="1365.7" font-size="20.2" fill="#17305e" textLength="277" lengthAdjust="spacingAndGlyphs" font-weight="bold" stroke="#17305e" stroke-width="0.45" xml:space="preserve">RFP - 99397 - Executive Search</text>
<text x="110" y="1395.7" font-size="20.2" fill="#17305e" textLength="263" lengthAdjust="spacingAndGlyphs" font-weight="bold" stroke="#17305e" stroke-width="0.45" xml:space="preserve">Consulting Services - Virginia</text>
<text x="410" y="1365.7" font-size="20.2" fill="#000" textLength="52.3" lengthAdjust="spacingAndGlyphs"  xml:space="preserve">III.A.3</text>
<text x="650.5" y="1365.7" font-size="20.2" fill="#000" textLength="148.5" lengthAdjust="spacingAndGlyphs"  xml:space="preserve">Advertise/Solicit</text>
<text x="650.5" y="1395.7" font-size="20.2" fill="#000" textLength="99.5" lengthAdjust="spacingAndGlyphs"  xml:space="preserve">Candidates</text>
<text x="890.8" y="1365.7" font-size="20.2" fill="#000" textLength="9.8" lengthAdjust="spacingAndGlyphs"  xml:space="preserve">3</text>
<path d="M886 1344.1 L898 1344.1 L886 1355.9 Z" fill="#38801f"/>
<text x="1070.5" y="1365.7" font-size="20.2" fill="#000" textLength="43.42" lengthAdjust="spacingAndGlyphs"  xml:space="preserve">This </text>
<text x="1113.92" y="1365.7" font-size="20.2" fill="#000" textLength="130.13" lengthAdjust="spacingAndGlyphs" font-weight="bold"  xml:space="preserve">should include</text>
<text x="1244.06" y="1365.7" font-size="20.2" fill="#000" textLength="258.44" lengthAdjust="spacingAndGlyphs"  xml:space="preserve"> using sources beyond public</text>
<text x="1070.5" y="1395.7" font-size="20.2" fill="#000" textLength="519" lengthAdjust="spacingAndGlyphs"  xml:space="preserve">advertising and the existing pool of candidates on file with</text>
<text x="1070.5" y="1425.7" font-size="20.2" fill="#000" textLength="34.07" lengthAdjust="spacingAndGlyphs"  xml:space="preserve">the </text>
<text x="1104.57" y="1425.7" font-size="20.2" fill="#000" textLength="89.85" lengthAdjust="spacingAndGlyphs" font-weight="bold"  xml:space="preserve">requested</text>
<text x="1194.42" y="1425.7" font-size="20.2" fill="#000" textLength="395.08" lengthAdjust="spacingAndGlyphs"  xml:space="preserve"> Commonwealth agency and/or search firm.</text>
<text x="99" y="1493.7" font-size="20.2" fill="#000" text-anchor="end"  xml:space="preserve">9</text>
<text x="110" y="1493.7" font-size="20.2" fill="#17305e" textLength="277" lengthAdjust="spacingAndGlyphs" font-weight="bold" stroke="#17305e" stroke-width="0.45" xml:space="preserve">RFP - 99397 - Executive Search</text>
<text x="110" y="1523.7" font-size="20.2" fill="#17305e" textLength="263" lengthAdjust="spacingAndGlyphs" font-weight="bold" stroke="#17305e" stroke-width="0.45" xml:space="preserve">Consulting Services - Virginia</text>
<text x="410" y="1493.7" font-size="20.2" fill="#000" textLength="52.3" lengthAdjust="spacingAndGlyphs"  xml:space="preserve">III.A.3</text>
<text x="650.5" y="1493.7" font-size="20.2" fill="#000" textLength="148.5" lengthAdjust="spacingAndGlyphs"  xml:space="preserve">Advertise/Solicit</text>
<text x="650.5" y="1523.7" font-size="20.2" fill="#000" textLength="99.5" lengthAdjust="spacingAndGlyphs"  xml:space="preserve">Candidates</text>
<text x="890.8" y="1493.7" font-size="20.2" fill="#000" textLength="9.8" lengthAdjust="spacingAndGlyphs"  xml:space="preserve">3</text>
<path d="M886 1472.1 L898 1472.1 L886 1483.9 Z" fill="#38801f"/>
<text x="1070.5" y="1493.7" font-size="20.2" fill="#000" textLength="40.2" lengthAdjust="spacingAndGlyphs"  xml:space="preserve">The </text>
<text x="1110.7" y="1493.7" font-size="20.2" fill="#000" textLength="141.79" lengthAdjust="spacingAndGlyphs" font-weight="bold"  xml:space="preserve">Contractor shall</text>
<text x="1252.48" y="1493.7" font-size="20.2" fill="#000" textLength="301.51" lengthAdjust="spacingAndGlyphs"  xml:space="preserve"> develop marketing materials and </text>
<text x="1553.99" y="1493.7" font-size="20.2" fill="#000" textLength="38.01" lengthAdjust="spacingAndGlyphs" font-weight="bold"  xml:space="preserve">plan</text>
<text x="1070.5" y="1523.7" font-size="20.2" fill="#000" textLength="472.5" lengthAdjust="spacingAndGlyphs"  xml:space="preserve">and utilize social media and other methods to source</text>
<text x="1070.5" y="1553.7" font-size="20.2" fill="#000" textLength="102" lengthAdjust="spacingAndGlyphs"  xml:space="preserve">candidates.</text>
<text x="99" y="1589.7" font-size="20.2" fill="#000" text-anchor="end"  xml:space="preserve">10</text>
<text x="110" y="1589.7" font-size="20.2" fill="#17305e" textLength="277" lengthAdjust="spacingAndGlyphs" font-weight="bold" stroke="#17305e" stroke-width="0.45" xml:space="preserve">RFP - 99397 - Executive Search</text>
<text x="110" y="1619.7" font-size="20.2" fill="#17305e" textLength="263" lengthAdjust="spacingAndGlyphs" font-weight="bold" stroke="#17305e" stroke-width="0.45" xml:space="preserve">Consulting Services - Virginia</text>
<text x="410" y="1589.7" font-size="20.2" fill="#000" textLength="52.3" lengthAdjust="spacingAndGlyphs"  xml:space="preserve">III.A.3</text>
<text x="650.5" y="1589.7" font-size="20.2" fill="#000" textLength="148.5" lengthAdjust="spacingAndGlyphs"  xml:space="preserve">Advertise/Solicit</text>
<text x="650.5" y="1619.7" font-size="20.2" fill="#000" textLength="99.5" lengthAdjust="spacingAndGlyphs"  xml:space="preserve">Candidates</text>
<text x="890.8" y="1589.7" font-size="20.2" fill="#000" textLength="9.8" lengthAdjust="spacingAndGlyphs"  xml:space="preserve">3</text>
<path d="M886 1568.1 L898 1568.1 L886 1579.9 Z" fill="#38801f"/>
<text x="1070.5" y="1589.7" font-size="20.2" fill="#000" textLength="87.71" lengthAdjust="spacingAndGlyphs"  xml:space="preserve">Positions </text>
<text x="1158.21" y="1589.7" font-size="20.2" fill="#000" textLength="61.03" lengthAdjust="spacingAndGlyphs" font-weight="bold"  xml:space="preserve">should</text>
<text x="1219.24" y="1589.7" font-size="20.2" fill="#000" textLength="354.26" lengthAdjust="spacingAndGlyphs"  xml:space="preserve"> be posted within 4 weeks of contracted</text>
<text x="1070.5" y="1619.7" font-size="20.2" fill="#000" textLength="306.06" lengthAdjust="spacingAndGlyphs"  xml:space="preserve">services or a date specified by the </text>
<text x="1376.56" y="1619.7" font-size="20.2" fill="#000" textLength="87.44" lengthAdjust="spacingAndGlyphs" font-weight="bold"  xml:space="preserve">requested</text>
<text x="1070.5" y="1649.7" font-size="20.2" fill="#000" textLength="417.5" lengthAdjust="spacingAndGlyphs"  xml:space="preserve">Commonwealth agency management and staff.</text>
<text x="99" y="1685.7" font-size="20.2" fill="#000" text-anchor="end"  xml:space="preserve">11</text>
<text x="110" y="1685.7" font-size="20.2" fill="#17305e" textLength="277" lengthAdjust="spacingAndGlyphs" font-weight="bold" stroke="#17305e" stroke-width="0.45" xml:space="preserve">RFP - 99397 - Executive Search</text>
<text x="110" y="1715.7" font-size="20.2" fill="#17305e" textLength="263" lengthAdjust="spacingAndGlyphs" font-weight="bold" stroke="#17305e" stroke-width="0.45" xml:space="preserve">Consulting Services - Virginia</text>
<text x="410" y="1685.7" font-size="20.2" fill="#000" textLength="52.3" lengthAdjust="spacingAndGlyphs"  xml:space="preserve">III.A.4</text>
<text x="650.5" y="1685.7" font-size="20.2" fill="#000" textLength="213" lengthAdjust="spacingAndGlyphs"  xml:space="preserve">Job Application Software</text>
<text x="890.8" y="1685.7" font-size="20.2" fill="#000" textLength="9.8" lengthAdjust="spacingAndGlyphs"  xml:space="preserve">4</text>
<path d="M886 1664.1 L898 1664.1 L886 1675.9 Z" fill="#38801f"/>
<text x="1070.5" y="1685.7" font-size="20.2" fill="#000" textLength="16.95" lengthAdjust="spacingAndGlyphs"  xml:space="preserve">If </text>
<text x="1087.45" y="1685.7" font-size="20.2" fill="#000" textLength="89.47" lengthAdjust="spacingAndGlyphs" font-weight="bold"  xml:space="preserve">requested</text>
<text x="1176.92" y="1685.7" font-size="20.2" fill="#000" textLength="45.22" lengthAdjust="spacingAndGlyphs"  xml:space="preserve">, the </text>
<text x="1222.14" y="1685.7" font-size="20.2" fill="#000" textLength="143.54" lengthAdjust="spacingAndGlyphs" font-weight="bold"  xml:space="preserve">Contractor shall</text>
<text x="1365.68" y="1685.7" font-size="20.2" fill="#000" textLength="219.32" lengthAdjust="spacingAndGlyphs"  xml:space="preserve"> use the Commonwealth</text>
</g>
<text x="182.5" y="46.5" font-size="23.5" fill="#4d4d4d" textLength="99.5" lengthAdjust="spacingAndGlyphs"  xml:space="preserve">AutoSave</text>
<text x="912.5" y="47" font-size="23.7" fill="#272727" textLength="371.0" lengthAdjust="spacingAndGlyphs"  xml:space="preserve">ComplianceMatrix_02-06-2026_</text>
<text x="1284.5" y="47" font-size="23.7" fill="#272727" textLength="148.5" lengthAdjust="spacingAndGlyphs"  xml:space="preserve">OPP260273_</text>
<text x="1433.7" y="47" font-size="23.7" fill="#272727" textLength="144.3" lengthAdjust="spacingAndGlyphs"  xml:space="preserve">EXECUTIVE_</text>
<text x="1578.7" y="47" font-size="23.7" fill="#272727" textLength="108.3" lengthAdjust="spacingAndGlyphs"  xml:space="preserve">SEARCH_</text>
<text x="1687.5" y="47" font-size="23.7" fill="#272727" textLength="282.5" lengthAdjust="spacingAndGlyphs"  xml:space="preserve">CONSULTING_SERVICES</text>
<text x="2029" y="47" font-size="23.7" fill="#606060" textLength="97" lengthAdjust="spacingAndGlyphs"  xml:space="preserve">No Label</text>
<text x="23" y="108" font-size="25" fill="#262626" textLength="74" lengthAdjust="spacingAndGlyphs" font-weight="bold"  xml:space="preserve">Home</text>
<text x="144.5" y="108" font-size="25" fill="#2b2b2b" textLength="70" lengthAdjust="spacingAndGlyphs" stroke="#2b2b2b" stroke-width="0.7" xml:space="preserve">Insert</text>
<text x="266.5" y="108" font-size="25" fill="#2b2b2b" textLength="61.5" lengthAdjust="spacingAndGlyphs" stroke="#2b2b2b" stroke-width="0.7" xml:space="preserve">Draw</text>
<text x="379" y="108" font-size="25" fill="#2b2b2b" textLength="150" lengthAdjust="spacingAndGlyphs" stroke="#2b2b2b" stroke-width="0.7" xml:space="preserve">Page Layout</text>
<text x="582.5" y="108" font-size="25" fill="#2b2b2b" textLength="113.5" lengthAdjust="spacingAndGlyphs" stroke="#2b2b2b" stroke-width="0.7" xml:space="preserve">Formulas</text>
<text x="749" y="108" font-size="25" fill="#2b2b2b" textLength="55.5" lengthAdjust="spacingAndGlyphs" stroke="#2b2b2b" stroke-width="0.7" xml:space="preserve">Data</text>
<text x="853" y="108" font-size="25" fill="#2b2b2b" textLength="86" lengthAdjust="spacingAndGlyphs" stroke="#2b2b2b" stroke-width="0.7" xml:space="preserve">Review</text>
<text x="989" y="108" font-size="25" fill="#2b2b2b" textLength="58" lengthAdjust="spacingAndGlyphs" stroke="#2b2b2b" stroke-width="0.7" xml:space="preserve">View</text>
<text x="1098" y="108" font-size="25" fill="#2b2b2b" textLength="118.5" lengthAdjust="spacingAndGlyphs" stroke="#2b2b2b" stroke-width="0.7" xml:space="preserve">Automate</text>
<text x="1269" y="108" font-size="25" fill="#2b2b2b" textLength="96" lengthAdjust="spacingAndGlyphs" stroke="#2b2b2b" stroke-width="0.7" xml:space="preserve">Acrobat</text>
<text x="2659" y="111" font-size="24.5" fill="#1c1c1c" textLength="129" lengthAdjust="spacingAndGlyphs" stroke="#1c1c1c" stroke-width="0.45" xml:space="preserve">Comments</text>
<text x="2888" y="111" font-size="24.5" fill="#fff" textLength="68.5" lengthAdjust="spacingAndGlyphs" font-weight="bold"  xml:space="preserve">Share</text>
<text x="242" y="179.5" font-size="23.7" fill="#1c1c1c" textLength="152" lengthAdjust="spacingAndGlyphs"  xml:space="preserve">Calibri (Body)</text>
<text x="526.5" y="179.5" font-size="23.7" fill="#1c1c1c" textLength="24.5" lengthAdjust="spacingAndGlyphs"  xml:space="preserve">11</text>
<text x="1217" y="179.5" font-size="23.7" fill="#1c1c1c" textLength="85.5" lengthAdjust="spacingAndGlyphs"  xml:space="preserve">General</text>
<text x="41" y="236" font-size="21.3" fill="#161616" textLength="53.5" lengthAdjust="spacingAndGlyphs" stroke="#161616" stroke-width="0.3" xml:space="preserve">Paste</text>
<text x="1560" y="235.5" font-size="21.3" fill="#161616" textLength="112" lengthAdjust="spacingAndGlyphs" stroke="#161616" stroke-width="0.3" xml:space="preserve">Conditional</text>
<text x="1562.5" y="259.5" font-size="21.3" fill="#161616" textLength="107.5" lengthAdjust="spacingAndGlyphs" stroke="#161616" stroke-width="0.3" xml:space="preserve">Formatting</text>
<text x="1694.5" y="235.5" font-size="21.3" fill="#161616" textLength="69.5" lengthAdjust="spacingAndGlyphs" stroke="#161616" stroke-width="0.3" xml:space="preserve">Format</text>
<text x="1689" y="259.5" font-size="21.3" fill="#161616" textLength="81" lengthAdjust="spacingAndGlyphs" stroke="#161616" stroke-width="0.3" xml:space="preserve">as Table</text>
<text x="1810.5" y="235.5" font-size="21.3" fill="#161616" textLength="37" lengthAdjust="spacingAndGlyphs" stroke="#161616" stroke-width="0.3" xml:space="preserve">Cell</text>
<text x="1799" y="259.5" font-size="21.3" fill="#161616" textLength="60.5" lengthAdjust="spacingAndGlyphs" stroke="#161616" stroke-width="0.3" xml:space="preserve">Styles</text>
<text x="1972" y="167.5" font-size="21.3" fill="#161616" textLength="55" lengthAdjust="spacingAndGlyphs" stroke="#161616" stroke-width="0.3" xml:space="preserve">Insert</text>
<text x="1972" y="211.5" font-size="21.3" fill="#161616" textLength="62" lengthAdjust="spacingAndGlyphs" stroke="#161616" stroke-width="0.3" xml:space="preserve">Delete</text>
<text x="1972" y="255.5" font-size="21.3" fill="#161616" textLength="69" lengthAdjust="spacingAndGlyphs" stroke="#161616" stroke-width="0.3" xml:space="preserve">Format</text>
<text x="2203" y="235.5" font-size="21.3" fill="#161616" textLength="61" lengthAdjust="spacingAndGlyphs" stroke="#161616" stroke-width="0.3" xml:space="preserve">Sort &amp;</text>
<text x="2209" y="259.5" font-size="21.3" fill="#161616" textLength="50" lengthAdjust="spacingAndGlyphs" stroke="#161616" stroke-width="0.3" xml:space="preserve">Filter</text>
<text x="2301" y="235.5" font-size="21.3" fill="#161616" textLength="62" lengthAdjust="spacingAndGlyphs" stroke="#161616" stroke-width="0.3" xml:space="preserve">Find &amp;</text>
<text x="2301" y="259.5" font-size="21.3" fill="#161616" textLength="62" lengthAdjust="spacingAndGlyphs" stroke="#161616" stroke-width="0.3" xml:space="preserve">Select</text>
<text x="2429.5" y="235.5" font-size="21.3" fill="#161616" textLength="102.5" lengthAdjust="spacingAndGlyphs" stroke="#161616" stroke-width="0.3" xml:space="preserve">Sensitivity</text>
<text x="2584.5" y="235.5" font-size="21.3" fill="#161616" textLength="77" lengthAdjust="spacingAndGlyphs" stroke="#161616" stroke-width="0.3" xml:space="preserve">Add-ins</text>
<text x="2713" y="235.5" font-size="21.3" fill="#161616" textLength="70" lengthAdjust="spacingAndGlyphs" stroke="#161616" stroke-width="0.3" xml:space="preserve">Copilot</text>
<text x="2848.5" y="235.5" font-size="21.3" fill="#161616" textLength="112.5" lengthAdjust="spacingAndGlyphs" stroke="#161616" stroke-width="0.3" xml:space="preserve">Create PDF</text>
<text x="2836" y="259.5" font-size="21.3" fill="#161616" textLength="138" lengthAdjust="spacingAndGlyphs" stroke="#161616" stroke-width="0.3" xml:space="preserve">and share link</text>
<text x="246.3" y="243" font-size="26" fill="#2b2b2b" textLength="16.8" lengthAdjust="spacingAndGlyphs" font-weight="bold" stroke="#2b2b2b" stroke-width="0.4" xml:space="preserve">B</text>
<text x="347.8" y="243" font-size="26" fill="#2b2b2b" textLength="18.6" lengthAdjust="spacingAndGlyphs"  xml:space="preserve">U</text>
<text x="638" y="181" font-size="33.5" fill="#2b2b2b" textLength="22" lengthAdjust="spacingAndGlyphs"  xml:space="preserve">A</text>
<text x="693" y="181" font-size="26.5" fill="#2b2b2b" textLength="17.5" lengthAdjust="spacingAndGlyphs"  xml:space="preserve">A</text>
<text x="636" y="242.3" font-size="31" fill="#2b2b2b" textLength="20.8" lengthAdjust="spacingAndGlyphs"  xml:space="preserve">A</text>
<text x="1219.5" y="246" font-size="33" fill="#2b2b2b" textLength="14.5" lengthAdjust="spacingAndGlyphs"  xml:space="preserve">$</text>
<text x="1289" y="249" font-size="36" fill="#2b2b2b" textLength="29" lengthAdjust="spacingAndGlyphs"  xml:space="preserve">%</text>
<text x="20" y="313.7" font-size="24.6" fill="#1e1e1e" textLength="28.6" lengthAdjust="spacingAndGlyphs" stroke="#1e1e1e" stroke-width="0.3" xml:space="preserve">A1</text>
<text x="303" y="319.5" font-size="31" fill="#3a3a3a" textLength="28.5" lengthAdjust="spacingAndGlyphs" style="font-family:'Liberation Serif',serif" font-style="italic" stroke="#3a3a3a" stroke-width="0.45" xml:space="preserve">fx</text>
<text x="169" y="1708" font-size="23.3" fill="#38824f" textLength="357" lengthAdjust="spacingAndGlyphs" font-weight="bold"  xml:space="preserve">RFP - 99397 - Executive Search</text>
<text x="49.7" y="1762.6" font-size="22.5" fill="#6c6c6c" textLength="67.5" lengthAdjust="spacingAndGlyphs"  xml:space="preserve">Ready</text>
<text x="206" y="1762.6" font-size="22.5" fill="#6c6c6c" textLength="276" lengthAdjust="spacingAndGlyphs"  xml:space="preserve">Accessibility: Investigate</text>
<text x="2912" y="1763.3" font-size="22.5" fill="#6c6c6c" textLength="62.5" lengthAdjust="spacingAndGlyphs"  xml:space="preserve">100%</text>
<path d="M99 174.3 L103.75 180.5 L108.5 174.3" stroke="#2b2b2b" stroke-width="3.0" fill="none" stroke-linecap="round" stroke-linejoin="round" />
<path d="M171 202.3 L175.75 208.5 L180.5 202.3" stroke="#2b2b2b" stroke-width="3.0" fill="none" stroke-linecap="round" stroke-linejoin="round" />
<path d="M388.5 233.8 L393.25 240 L398.0 233.8" stroke="#2b2b2b" stroke-width="3.0" fill="none" stroke-linecap="round" stroke-linejoin="round" />
<path d="M494 233.8 L498.75 240 L503.5 233.8" stroke="#2b2b2b" stroke-width="3.0" fill="none" stroke-linecap="round" stroke-linejoin="round" />
<path d="M600 233.8 L604.75 240 L609.5 233.8" stroke="#2b2b2b" stroke-width="3.0" fill="none" stroke-linecap="round" stroke-linejoin="round" />
<path d="M677 233.8 L681.75 240 L686.5 233.8" stroke="#2b2b2b" stroke-width="3.0" fill="none" stroke-linecap="round" stroke-linejoin="round" />
<path d="M1010 170.3 L1014.75 176.5 L1019.5 170.3" stroke="#2b2b2b" stroke-width="3.0" fill="none" stroke-linecap="round" stroke-linejoin="round" />
<path d="M1145 170.3 L1149.75 176.5 L1154.5 170.3" stroke="#2b2b2b" stroke-width="3.0" fill="none" stroke-linecap="round" stroke-linejoin="round" />
<path d="M1145 233.8 L1149.75 240 L1154.5 233.8" stroke="#2b2b2b" stroke-width="3.0" fill="none" stroke-linecap="round" stroke-linejoin="round" />
<path d="M1258.5 233.8 L1263.25 240 L1268.0 233.8" stroke="#2b2b2b" stroke-width="3.0" fill="none" stroke-linecap="round" stroke-linejoin="round" />
<path d="M1646.5 174.3 L1651.25 180.5 L1656.0 174.3" stroke="#2b2b2b" stroke-width="3.0" fill="none" stroke-linecap="round" stroke-linejoin="round" />
<path d="M1761 174.3 L1765.75 180.5 L1770.5 174.3" stroke="#2b2b2b" stroke-width="3.0" fill="none" stroke-linecap="round" stroke-linejoin="round" />
<path d="M1862 174.3 L1866.75 180.5 L1871.5 174.3" stroke="#2b2b2b" stroke-width="3.0" fill="none" stroke-linecap="round" stroke-linejoin="round" />
<path d="M2042 157.8 L2046.75 164 L2051.5 157.8" stroke="#2b2b2b" stroke-width="3.0" fill="none" stroke-linecap="round" stroke-linejoin="round" />
<path d="M2050 201.8 L2054.75 208 L2059.5 201.8" stroke="#2b2b2b" stroke-width="3.0" fill="none" stroke-linecap="round" stroke-linejoin="round" />
<path d="M2056 245.8 L2060.75 252 L2065.5 245.8" stroke="#2b2b2b" stroke-width="3.0" fill="none" stroke-linecap="round" stroke-linejoin="round" />
<path d="M2165 157.8 L2169.75 164 L2174.5 157.8" stroke="#2b2b2b" stroke-width="3.0" fill="none" stroke-linecap="round" stroke-linejoin="round" />
<path d="M2165 201.8 L2169.75 208 L2174.5 201.8" stroke="#2b2b2b" stroke-width="3.0" fill="none" stroke-linecap="round" stroke-linejoin="round" />
<path d="M2165 245.8 L2169.75 252 L2174.5 245.8" stroke="#2b2b2b" stroke-width="3.0" fill="none" stroke-linecap="round" stroke-linejoin="round" />
<path d="M2265 174.3 L2269.75 180.5 L2274.5 174.3" stroke="#2b2b2b" stroke-width="3.0" fill="none" stroke-linecap="round" stroke-linejoin="round" />
<path d="M2365 174.3 L2369.75 180.5 L2374.5 174.3" stroke="#2b2b2b" stroke-width="3.0" fill="none" stroke-linecap="round" stroke-linejoin="round" />
<path d="M2512 174.3 L2516.75 180.5 L2521.5 174.3" stroke="#2b2b2b" stroke-width="3.0" fill="none" stroke-linecap="round" stroke-linejoin="round" />
<path d="M491 170.3 L495.75 176.3 L500.5 170.3" stroke="#2b2b2b" stroke-width="2.5" fill="none" stroke-linecap="round" stroke-linejoin="round" />
<path d="M604 170.3 L608.75 176.3 L613.5 170.3" stroke="#2b2b2b" stroke-width="2.5" fill="none" stroke-linecap="round" stroke-linejoin="round" />
<path d="M1493.5 170.3 L1498.25 176.3 L1503.0 170.3" stroke="#2b2b2b" stroke-width="2.5" fill="none" stroke-linecap="round" stroke-linejoin="round" />
<path d="M593 36.3 L598.0 42.5 L603 36.3" stroke="#bdbdbd" stroke-width="2.8" fill="none" stroke-linecap="round" stroke-linejoin="round" />
<path d="M2136 35.3 L2142.5 42.0 L2149 35.3" stroke="#707070" stroke-width="2.7" fill="none" stroke-linecap="round" stroke-linejoin="round" />
<path d="M2974.5 99.8 L2981.5 107.5 L2988.5 99.8" stroke="#fff" stroke-width="2.8" fill="none" stroke-linecap="round" stroke-linejoin="round" />
<path d="M343.5 305.3 L348.75 312.0 L354.0 305.3" stroke="#cfcfcf" stroke-width="2.6" fill="none" stroke-linecap="round" stroke-linejoin="round" />
<path d="M385.6 48.5 V36.4 L398 24.2 L410.4 36.4 V48.5 a2 2 0 0 1 -2 2 H402.700 V42.200 a2 2 0 0 0 -2 -2 H395.300 a2 2 0 0 0 -2 2 V50.500 H387.600 a2 2 0 0 1 -2 -2 Z" stroke="#555555" stroke-width="2.3" fill="none" stroke-linecap="round" stroke-linejoin="round" />
<path d="M442.8 25.6 H460 L464.6 30.200 V46.800 a3.500 3.500 0 0 1 -3.500 3.500 H442.8 a3.500 3.500 0 0 1 -3.500 -3.500 V29.100 a3.500 3.500 0 0 1 3.500 -3.500 Z" stroke="#555555" stroke-width="2.3" fill="none" stroke-linecap="round" stroke-linejoin="round" />
<path d="M444.4 50.300 V43 a2 2 0 0 1 2 -2 H457.9 a2 2 0 0 1 2 2 V50.300" stroke="#555555" stroke-width="2.2" fill="none" stroke-linecap="round" stroke-linejoin="round" />
<path d="M445.8 25.600 V30 a2 2 0 0 0 2 2 H455.3 a2 2 0 0 0 2 -2 V25.600" stroke="#555555" stroke-width="2.2" fill="none" stroke-linecap="round" stroke-linejoin="round" />
<path d="M503 50.300 H496.8 a3.500 3.500 0 0 1 -3.500 -3.500 V29.100 a3.500 3.500 0 0 1 3.500 -3.500 H514 L518.6 30.200 V34" stroke="#555555" stroke-width="2.3" fill="none" stroke-linecap="round" stroke-linejoin="round" />
<path d="M498.4 50.300 V43 a2 2 0 0 1 2 -2 H506" stroke="#555555" stroke-width="2.2" fill="none" stroke-linecap="round" stroke-linejoin="round" />
<path d="M499.8 25.600 V30 a2 2 0 0 0 2 2 H509.3 a2 2 0 0 0 2 -2 V25.600" stroke="#555555" stroke-width="2.2" fill="none" stroke-linecap="round" stroke-linejoin="round" />
<path d="M503.500 53.800 L505.800 47.500 L515.600 37.700 a3.600 3.600 0 0 1 5.100 0 L521.200 38.200 a3.600 3.600 0 0 1 0 5.100 L511.400 53.100 Z" fill="#666" />
<path d="M548.700 22.500 V33 H559" stroke="#c4c4c4" stroke-width="2.3" fill="none" stroke-linecap="round" stroke-linejoin="miter" />
<path d="M549.200 32.500 L557.800 25.300 A9.500 9.500 0 0 1 571.800 38.100 L553.500 53" stroke="#c4c4c4" stroke-width="2.3" fill="none" stroke-linecap="round" stroke-linejoin="round" />
<path d="M652.400 24.300 V31 H644.800" stroke="#555555" stroke-width="2.3" fill="none" stroke-linecap="round" stroke-linejoin="miter" />
<path d="M651.600 31.200 A13.400 13.400 0 1 0 653.300 39.500" stroke="#555555" stroke-width="2.3" fill="none" stroke-linecap="round" stroke-linejoin="round" />
<circle cx="684" cy="38" r="2.7" fill="#4a4a4a"/>
<circle cx="694.2" cy="38" r="2.7" fill="#4a4a4a"/>
<circle cx="704.5" cy="38" r="2.7" fill="#4a4a4a"/>
<rect x="877" y="27" width="25.800" height="22.500" rx="3.500" fill="#fdfdfd" stroke="#a5a5a5" stroke-width="1.600"/>
<rect x="884" y="29.800" width="6.800" height="7.800" fill="#56ab4b"/><rect x="890.800" y="29.800" width="5.600" height="7.800" fill="#93dc70"/><rect x="884" y="37.600" width="6.800" height="8.400" fill="#2f8a3f"/><rect x="890.800" y="37.600" width="5.600" height="8.400" fill="#1e6934"/>
<rect x="874" y="40" width="14.300" height="14.300" rx="2.500" fill="#1f7040"/>
<text x="876.3" y="52.2" font-size="13.8" fill="#fff" textLength="9.8" lengthAdjust="spacingAndGlyphs" font-weight="bold"  xml:space="preserve">X</text>
<path d="M2005.8 27 C2009 29.5 2012 30.3 2015 30.5 V38 C2015 43 2011 46.5 2005.8 48.5 C2000.5 46.5 1996.6 43 1996.6 38 V30.5 C1999.5 30.3 2002.5 29.5 2005.8 27 Z" stroke="#5c5c5c" stroke-width="2.1" fill="none" stroke-linecap="round" stroke-linejoin="round" />
<text x="2005.8" y="43" font-size="14" fill="#5c5c5c" font-weight="bold" text-anchor="middle"  xml:space="preserve">?</text>
<circle cx="2981" cy="36" r="11" fill="none" stroke="#585858" stroke-width="2.3"/>
<path d="M2989 44 L2997 51.500" stroke="#585858" stroke-width="2.5" fill="none" stroke-linecap="round" stroke-linejoin="round" />
<path d="M2621.5 89.5 H2641.5 a5.5 5.5 0 0 1 5.5 5.5 V103.5 a5.5 5.5 0 0 1 -5.5 5.5 H2632.5 L2623.5 116.5 V109 H2621.5 a5.5 5.5 0 0 1 -5.5 -5.5 V95 a5.5 5.5 0 0 1 5.5 -5.5 Z" stroke="#1c1c1c" stroke-width="2.3" fill="none" stroke-linecap="round" stroke-linejoin="round" />
<path d="M2859.5 93.5 H2853.5 a5 5 0 0 0 -5 5 V110 a5 5 0 0 0 5 5 H2869.5 a5 5 0 0 0 5 -5 V107" stroke="#fff" stroke-width="2.3" fill="none" stroke-linecap="round" stroke-linejoin="round" />
<path d="M2856.5 108 C2856.5 99 2862 95.5 2868.5 95.5 V88.5 L2878.5 98 L2868.5 107.5 V101 C2863 101 2859 103 2856.5 108 Z" stroke="#fff" stroke-width="2.1" fill="none" stroke-linecap="round" stroke-linejoin="round" />
<rect x="35.3" y="157.3" width="39.4" height="45.6" fill="#f6dd9c" stroke="#e48f37" stroke-width="2.3"/>
<rect x="40" y="161.5" width="30" height="37" fill="#fbfbfb"/>
<path d="M43 163 V154 H49.5 a5.7 5.7 0 0 1 11 0 H67 V163 Z" fill="#fff" stroke="#787878" stroke-width="2"/>
<rect x="61.2" y="173.1" width="25.6" height="33.6" fill="#fafafa" stroke="#3a3a3a" stroke-width="2.2"/>
<path d="M136.3 144.5 L147 168.4 M147.7 144.5 L137 168.4" stroke="#3a3a3a" stroke-width="1.9" fill="none" stroke-linecap="round" stroke-linejoin="round" />
<circle cx="135.6" cy="172" r="3.6" fill="none" stroke="#3f8ad6" stroke-width="2.2"/><circle cx="148.2" cy="172" r="3.6" fill="none" stroke="#3f8ad6" stroke-width="2.2"/>
<path d="M138.5 215.2 H127.2 V189.3 H138.5 L143.5 194.3" stroke="#3a3a3a" stroke-width="2.2" fill="none" stroke-linecap="round" stroke-linejoin="round" />
<path d="M139 194.5 H150.5 L156.8 201 V218.3 H139 Z" fill="#f5f5f5" stroke="#3a3a3a" stroke-width="2.2" stroke-linejoin="round"/>
<path d="M150.5 194.5 V201 H156.8" stroke="#3a3a3a" stroke-width="1.8" fill="none" stroke-linecap="round" stroke-linejoin="round" />
<path d="M144 209.5 H152.5 M144 213.8 H152.5" stroke="#3a3a3a" stroke-width="1.8" fill="none" stroke-linecap="round" stroke-linejoin="round" />
<g transform="translate(147 245.5) rotate(45)"><path d="M-8.5 2.5 Q-10 9 -13.900 15 L6.500 16 L8.500 2.500 Z" fill="#fafafa" stroke="#e48f37" stroke-width="2.1" stroke-linejoin="round"/><path d="M-11 10.500 L7.300 10.500 L6.500 16 L-13.900 15 Z" fill="#f6dd9c" stroke="#e48f37" stroke-width="2.1" stroke-linejoin="round"/><rect x="-2.700" y="-16.500" width="5.400" height="15" rx="2.500" fill="#f5f5f5" stroke="#3a3a3a" stroke-width="2.1"/><rect x="-8.500" y="-2.600" width="17" height="5.200" rx="1" fill="#f5f5f5" stroke="#3a3a3a" stroke-width="2.1"/></g>
<path d="M448.8 221.2 H477.2 M448.8 234.6 H477.2 M449 221 V247 M463 221 V247 M477 221 V247" stroke="#1a1a1a" stroke-width="1.9" fill="none" stroke-linecap="butt" stroke-linejoin="round" stroke-dasharray="1.9 2.15" />
<path d="M448 248.2 H478" stroke="#111" stroke-width="2.4" stroke-linecap="butt"/>
<path d="M308.8 225.6 L303.6 242.4 M304.6 225.300 H313 M299.600 242.700 H308" stroke="#2b2b2b" stroke-width="1.9" fill="none" stroke-linecap="round" stroke-linejoin="round" />
<path d="M559 233.3 L569.3 223 L579 232.7 L568.6 243 Z" stroke="#2b2b2b" stroke-width="2.2" fill="none" stroke-linecap="round" stroke-linejoin="round" />
<path d="M569.3 225.5 V222 a2 2 0 0 1 4 0 V227" stroke="#2b2b2b" stroke-width="2" fill="none" stroke-linecap="round" stroke-linejoin="round" />
<path d="M578.5 226 C582.5 229.5 583.5 233.5 582.6 238.2 C581.8 234.8 580 232.2 576.5 229.8 Z" fill="#2f6fbd"/>
<path d="M659 163.3 L663 159.3 L667 163.3" stroke="#3f8ad6" stroke-width="2.3" fill="none" stroke-linecap="round" stroke-linejoin="round" />
<path d="M711 159.3 L715 163.3 L719 159.3" stroke="#3f8ad6" stroke-width="2.3" fill="none" stroke-linecap="round" stroke-linejoin="round" />
<path d="M780 157 H808" stroke="#2b2b2b" stroke-width="2.15"/>
<path d="M784.5 165 H803.5" stroke="#2b2b2b" stroke-width="2.15"/>
<path d="M780 173 H808" stroke="#2b2b2b" stroke-width="2.15"/>
<path d="M832 163 H860" stroke="#2b2b2b" stroke-width="2.15"/>
<path d="M836.5 171 H855.5" stroke="#2b2b2b" stroke-width="2.15"/>
<path d="M832 179 H860" stroke="#2b2b2b" stroke-width="2.15"/>
<path d="M884 171 H912" stroke="#2b2b2b" stroke-width="2.15"/>
<path d="M888.5 179 H907.5" stroke="#2b2b2b" stroke-width="2.15"/>
<path d="M884 187 H912" stroke="#2b2b2b" stroke-width="2.15"/>
<path d="M780 222.9 H808" stroke="#2b2b2b" stroke-width="2.15"/>
<path d="M780 231 H800" stroke="#2b2b2b" stroke-width="2.15"/>
<path d="M780 239.1 H808" stroke="#2b2b2b" stroke-width="2.15"/>
<path d="M780 247.2 H800" stroke="#2b2b2b" stroke-width="2.15"/>
<path d="M832 222.9 H860" stroke="#2b2b2b" stroke-width="2.15"/>
<path d="M836 231 H856" stroke="#2b2b2b" stroke-width="2.15"/>
<path d="M832 239.1 H860" stroke="#2b2b2b" stroke-width="2.15"/>
<path d="M836 247.2 H856" stroke="#2b2b2b" stroke-width="2.15"/>
<path d="M884 222.9 H912" stroke="#2b2b2b" stroke-width="2.15"/>
<path d="M892 231 H912" stroke="#2b2b2b" stroke-width="2.15"/>
<path d="M884 239.1 H912" stroke="#2b2b2b" stroke-width="2.15"/>
<path d="M892 247.2 H912" stroke="#2b2b2b" stroke-width="2.15"/>
<text x="0" y="0" font-size="22.500" fill="#2b2b2b" transform="translate(969.500 178) rotate(-45)">ab</text>
<path d="M975 184.5 L994 165.5 M985.5 165 H994.5 V174" stroke="#3f8ad6" stroke-width="2.3" fill="none" stroke-linecap="round" stroke-linejoin="round" />
<text x="1102" y="171.5" font-size="20.5" fill="#2b2b2b" textLength="23" lengthAdjust="spacingAndGlyphs"  xml:space="preserve">ab</text>
<text x="1102" y="185.5" font-size="20.5" fill="#2b2b2b" textLength="10" lengthAdjust="spacingAndGlyphs"  xml:space="preserve">c</text>
<path d="M1127 169 C1130.5 172 1130.5 179 1125 180.5 H1114.5 M1120 175.5 L1114.5 180.5 L1120 186" stroke="#3f8ad6" stroke-width="2.3" fill="none" stroke-linecap="round" stroke-linejoin="round" />
<path d="M966 222.9 H994 M982 231 H994 M982 239.1 H994 M966 247.2 H994" stroke="#2b2b2b" stroke-width="2.15"/>
<path d="M977.5 235 H967 M971.5 230.5 L967 235 L971.5 239.5" stroke="#3f8ad6" stroke-width="2.3" fill="none" stroke-linecap="round" stroke-linejoin="round" />
<path d="M1018 222.9 H1046 M1034 231 H1046 M1034 239.1 H1046 M1018 247.2 H1046" stroke="#2b2b2b" stroke-width="2.15"/>
<path d="M1018.5 235 H1029 M1024.5 230.5 L1029 235 L1024.5 239.5" stroke="#3f8ad6" stroke-width="2.3" fill="none" stroke-linecap="round" stroke-linejoin="round" />
<path d="M1099.7 221.2 H1127.3 V247.8 H1099.7 Z M1113.5 221.2 V227.5 M1113.5 241.5 V247.8" fill="#f4f4f4" stroke="#2b2b2b" stroke-width="2.3"/>
<rect x="1099.7" y="227.5" width="27.6" height="14" fill="#eef4fb" stroke="#3f8ad6" stroke-width="2.2"/>
<path d="M1103.5 234.5 H1123.5 M1107.5 230.5 L1103.5 234.5 L1107.5 238.5 M1119.5 230.5 L1123.5 234.5 L1119.5 238.5" stroke="#3f8ad6" stroke-width="2.1" fill="none" stroke-linecap="round" stroke-linejoin="round" />
<path d="M1357 224 c4.5 0 7.2 3.2 7.2 8 c0 7.5 -5 13.5 -12.7 16 l-1.2 -2.3 c4.3 -2 6.8 -4.8 7.3 -8.3 c-0.6 0.2 -1.3 0.3 -2 0.3 c-3.8 0 -6.6 -2.8 -6.6 -6.6 c0 -4 3.4 -7.1 8 -7.1 z" fill="#2b2b2b"/>
<path d="M1439 228 H1423.5 M1429 222.5 L1423.5 228 L1429 233.5" stroke="#3f8ad6" stroke-width="2.2" fill="none" stroke-linecap="round" stroke-linejoin="round" />
<text x="1438" y="235" font-size="17.5" fill="#2b2b2b" textLength="14" lengthAdjust="spacingAndGlyphs"  xml:space="preserve">.0</text>
<text x="1426" y="249.5" font-size="17.5" fill="#2b2b2b" textLength="26" lengthAdjust="spacingAndGlyphs"  xml:space="preserve">.00</text>
<text x="1478" y="235" font-size="17.5" fill="#2b2b2b" textLength="26" lengthAdjust="spacingAndGlyphs"  xml:space="preserve">.00</text>
<text x="1490" y="249.5" font-size="17.5" fill="#2b2b2b" textLength="14" lengthAdjust="spacingAndGlyphs"  xml:space="preserve">.0</text>
<path d="M1475 243 H1490.5 M1485 237.5 L1490.5 243 L1485 248.5" stroke="#3f8ad6" stroke-width="2.2" fill="none" stroke-linecap="round" stroke-linejoin="round" />
<rect x="1577.5" y="155.5" width="53" height="40.6" fill="#fbfbfb"/>
<path d="M1586.5 155.5 V196 M1621.5 155.5 V196 M1577.5 168.8 H1630.5 M1577.5 182.6 H1630.5" stroke="#6e6e6e" stroke-width="1.8" fill="none" stroke-linecap="butt" stroke-linejoin="round" />
<path d="M1577.5 155.5 H1630.5 V196.1 H1577.5 Z" stroke="#3a3a3a" stroke-width="2.1" fill="none" stroke-linecap="round" stroke-linejoin="miter" />
<rect x="1586.5" y="155.5" width="25" height="13.3" fill="#f09a9e" stroke="#c5392f" stroke-width="2"/>
<rect x="1586.5" y="182.6" width="29" height="13.5" fill="#f09a9e" stroke="#c5392f" stroke-width="2"/>
<rect x="1586.5" y="168.8" width="16.5" height="13.8" fill="#8fbdea" stroke="#2f6fbd" stroke-width="2"/>
<rect x="1692.6" y="155.5" width="53.8" height="40.6" fill="#fbfbfb"/>
<path d="M1709.8 155.5 V168.8 M1728.1 155.5 V168.8 M1692.6 168.8 H1709.8 M1692.6 182.6 H1709.8" stroke="#6e6e6e" stroke-width="1.8" fill="none" stroke-linecap="butt" stroke-linejoin="round" />
<rect x="1709.8" y="168.8" width="36.6" height="27.300" fill="#8fbdea" stroke="#2f6fbd" stroke-width="2"/>
<path d="M1728.1 168.8 V196.1 M1709.8 182.6 H1746.4" stroke="#2f6fbd" stroke-width="2" fill="none" stroke-linecap="butt" stroke-linejoin="round" />
<path d="M1746.4 168.8 V155.5 H1692.6 V196.1 H1709.8" stroke="#3a3a3a" stroke-width="2.1" fill="none" stroke-linecap="butt" stroke-linejoin="miter"  />
<g transform="translate(0 0)"><path d="M1727.2 190.2 C1733 181 1742 171.5 1748.5 168.8 C1750.5 168.2 1751.3 169.5 1750.5 171.2 C1746.5 178 1738 187.5 1730.2 193.8 Z" fill="#f5f5f5" stroke="#f5f5f5" stroke-width="6.500" stroke-linejoin="round"/><path d="M1726.8 190.3 C1721.5 188.6 1716.5 191.5 1715.5 196.5 C1714.8 200 1712.5 202.3 1706.2 203 C1711 207.5 1720.5 208.5 1726 204.5 C1730.5 201.2 1731.8 197 1730.3 193.8 Z" fill="#f5f5f5" stroke="#f5f5f5" stroke-width="6" stroke-linejoin="round"/><path d="M1727.2 190.2 C1733 181 1742 171.5 1748.5 168.8 C1750.5 168.2 1751.3 169.5 1750.5 171.2 C1746.5 178 1738 187.5 1730.2 193.8 Z" fill="#fdfdfd" stroke="#3a3a3a" stroke-width="1.900" stroke-linejoin="round"/><path d="M1726.8 190.3 C1721.5 188.6 1716.5 191.5 1715.5 196.5 C1714.8 200 1712.5 202.3 1706.2 203 C1711 207.5 1720.5 208.5 1726 204.5 C1730.5 201.2 1731.8 197 1730.3 193.8 Z" fill="#8fbdea" stroke="#2f6fbd" stroke-width="2" stroke-linejoin="round"/></g>
<rect x="1792.4" y="155.5" width="54" height="40.6" fill="#fbfbfb"/>
<path d="M1801.8 155.5 V196.1 M1836.9 155.5 V196.1 M1792.4 164.8 H1846.4 M1792.4 187.1 H1846.4" stroke="#6e6e6e" stroke-width="1.8" fill="none" stroke-linecap="butt" stroke-linejoin="round" />
<path d="M1792.4 155.5 H1846.4 V196.1 H1792.4 Z" stroke="#3a3a3a" stroke-width="2.1" fill="none" stroke-linecap="round" stroke-linejoin="miter" />
<rect x="1801.8" y="164.8" width="35.100" height="22.300" fill="#8fbdea" stroke="#2f6fbd" stroke-width="2.200"/>
<g transform="translate(100 0)"><path d="M1727.2 190.2 C1733 181 1742 171.5 1748.5 168.8 C1750.5 168.2 1751.3 169.5 1750.5 171.2 C1746.5 178 1738 187.5 1730.2 193.8 Z" fill="#f5f5f5" stroke="#f5f5f5" stroke-width="6.500" stroke-linejoin="round"/><path d="M1726.8 190.3 C1721.5 188.6 1716.5 191.5 1715.5 196.5 C1714.8 200 1712.5 202.3 1706.2 203 C1711 207.5 1720.5 208.5 1726 204.5 C1730.5 201.2 1731.8 197 1730.3 193.8 Z" fill="#f5f5f5" stroke="#f5f5f5" stroke-width="6" stroke-linejoin="round"/><path d="M1727.2 190.2 C1733 181 1742 171.5 1748.5 168.8 C1750.5 168.2 1751.3 169.5 1750.5 171.2 C1746.5 178 1738 187.5 1730.2 193.8 Z" fill="#fdfdfd" stroke="#3a3a3a" stroke-width="1.900" stroke-linejoin="round"/><path d="M1726.8 190.3 C1721.5 188.6 1716.5 191.5 1715.5 196.5 C1714.8 200 1712.5 202.3 1706.2 203 C1711 207.5 1720.5 208.5 1726 204.5 C1730.5 201.2 1731.8 197 1730.3 193.8 Z" fill="#8fbdea" stroke="#2f6fbd" stroke-width="2" stroke-linejoin="round"/></g>
<rect x="1946" y="155.800" width="12.500" height="8.600" fill="#8fbdea" stroke="#2f6fbd" stroke-width="2"/>
<path d="M1928 147.2 H1958.5 V172.3 H1928 Z M1938.3 147.2 V155.5 M1948.6 147.2 V172.3 M1938.3 164.5 V172.3 M1928 155.6 H1958.5 M1928 164.5 H1958.5" stroke="#3a3a3a" stroke-width="2" fill="none" stroke-linecap="butt" stroke-linejoin="round" />
<rect x="1926" y="153" width="15.500" height="14" fill="#f5f5f5"/>
<path d="M1944 160 H1928.6 M1934.4 153.8 L1928.6 160 L1934.4 166.2" stroke="#3f8ad6" stroke-width="2.3" fill="none" stroke-linecap="round" stroke-linejoin="round" />
<path d="M1928 191.2 H1958.5 V216.3 H1928 Z M1938.3 191.2 V216.3 M1948.6 191.2 V216.3 M1928 199.6 H1958.5 M1928 208.5 H1958.5" stroke="#3a3a3a" stroke-width="2" fill="none" stroke-linecap="butt" stroke-linejoin="round" />
<rect x="1930.5" y="197.5" width="30" height="13" fill="#f5f5f5"/>
<rect x="1933.5" y="198.8" width="10.5" height="10.5" fill="#8fbdea" stroke="#2f6fbd" stroke-width="2"/><path d="M1944 201 L1947.2 204 L1944 207 Z" fill="#2f6fbd"/>
<path d="M1949.2 199.5 L1958 208.5 M1958 199.5 L1949.2 208.5" stroke="#e0463c" stroke-width="2.2" fill="none" stroke-linecap="round" stroke-linejoin="round" />
<path d="M1928 237.5 H1958.5 V262.3 H1928 Z M1938.3 237.5 V262.3 M1948.6 237.5 V262.3 M1928 245.8 H1958.5 M1928 254.2 H1958.5" stroke="#3a3a3a" stroke-width="2" fill="none" stroke-linecap="butt" stroke-linejoin="round" />
<rect x="1936.5" y="245.8" width="14" height="11" fill="#8fbdea" stroke="#2f6fbd" stroke-width="2"/>
<rect x="1932" y="229.5" width="22" height="7" fill="#f5f5f5"/>
<path d="M1934.5 234 H1952 M1934.5 231 V237 M1952 231 V237" stroke="#2f6fbd" stroke-width="2" fill="none" stroke-linecap="butt" stroke-linejoin="round" />
<path d="M2147 151.5 V147.2 H2125.5 L2137.5 159.6 L2125.5 172 H2147 V167.8" stroke="#2b2b2b" stroke-width="2.2" fill="none" stroke-linecap="butt" stroke-linejoin="miter"  />
<rect x="2122.2" y="191.2" width="29" height="24.8" fill="none" stroke="#2b2b2b" stroke-width="2.4"/><path d="M2122 194.8 H2151.4" stroke="#2b2b2b" stroke-width="2.2"/>
<path d="M2136.8 199.5 V211.5 M2131.5 206.5 L2136.8 211.8 L2142 206.5" stroke="#3f8ad6" stroke-width="2.3" fill="none" stroke-linecap="round" stroke-linejoin="round" />
<path d="M2140.5 233.8 L2150.3 243.6 L2131.8 262 L2122 252.2 Z" fill="none" stroke="#9a3fa8" stroke-width="2.3" stroke-linejoin="round"/><path d="M2122 252.2 L2130.8 243.4 L2140.6 253.2 L2131.8 262 Z" fill="#d9a2dd" stroke="#9a3fa8" stroke-width="2.3" stroke-linejoin="round"/>
<text x="2194.5" y="173" font-size="31" fill="#3f8ad6" textLength="19.5" lengthAdjust="spacingAndGlyphs"  xml:space="preserve">A</text>
<text x="2195" y="201" font-size="31" fill="#2b2b2b" textLength="17.5" lengthAdjust="spacingAndGlyphs"  xml:space="preserve">Z</text>
<path d="M2219 163 H2249.3 V167 L2238.5 179 V192.2 H2230.3 V179 L2219 167 Z" stroke="#2b2b2b" stroke-width="2.2" fill="none" stroke-linecap="round" stroke-linejoin="miter" />
<circle cx="2329" cy="168" r="20" fill="none" stroke="#2b2b2b" stroke-width="2.2"/>
<path d="M2315 183 L2293 205" stroke="#2b2b2b" stroke-width="2.3" fill="none" stroke-linecap="round" stroke-linejoin="round" />
<path d="M2467 149.8 H2448.2 V202.3 H2488 V178" stroke="#3f8ad6" stroke-width="2.4" fill="none" stroke-linecap="butt" stroke-linejoin="miter"  />
<g transform="translate(2477 168.5) rotate(-41)"><rect x="-25" y="-6.8" width="23.5" height="13.6" fill="#f5f5f5" stroke="#3f8ad6" stroke-width="2.2"/><rect x="-21" y="-2.4" width="15.5" height="4.8" fill="none" stroke="#3f8ad6" stroke-width="2"/><rect x="1.5" y="-11" width="8.5" height="22" fill="#3f8ad6"/><rect x="13.5" y="-7.5" width="12.5" height="15" fill="#f5f5f5" stroke="#3f8ad6" stroke-width="2.2"/></g>
<rect x="2594.2" y="148.2" width="55.6" height="55.2" fill="none" stroke="#d2532d" stroke-width="2.5"/>
<rect x="2599.5" y="153.5" width="19.5" height="19.5" fill="none" stroke="#d2532d" stroke-width="2"/>
<rect x="2599.5" y="179" width="19.5" height="19.5" fill="none" stroke="#d2532d" stroke-width="2"/>
<rect x="2625" y="153.5" width="19.5" height="19.5" fill="none" stroke="#d2532d" stroke-width="2"/>
<rect x="2625" y="179" width="19.5" height="19.5" fill="none" stroke="#d2532d" stroke-width="2"/>
<defs><linearGradient id="cp1" x1="0.45" y1="0" x2="0.25" y2="1"><stop offset="0" stop-color="#4db4f2"/><stop offset="0.22" stop-color="#3b8fe0"/><stop offset="0.55" stop-color="#5cb67c"/><stop offset="0.85" stop-color="#e6cb45"/><stop offset="1" stop-color="#f6c640"/></linearGradient><linearGradient id="cp2" x1="0.75" y1="0" x2="0.4" y2="1"><stop offset="0" stop-color="#9354ea"/><stop offset="0.3" stop-color="#c357c8"/><stop offset="0.6" stop-color="#e45d92"/><stop offset="0.85" stop-color="#f0966a"/><stop offset="1" stop-color="#f6b458"/></linearGradient><linearGradient id="cp3" x1="0" y1="0" x2="1" y2="0.4"><stop offset="0" stop-color="#1c3fc6"/><stop offset="1" stop-color="#3466dc"/></linearGradient><linearGradient id="cp4" x1="0" y1="0" x2="1" y2="1"><stop offset="0" stop-color="#f59455"/><stop offset="1" stop-color="#cf4a38"/></linearGradient></defs>
<path d="M2755 149.700 C2760 149.700 2762.500 151.500 2764 155.500 C2765.500 159.500 2766.500 162 2769.500 163.400 H2750.300 Z" fill="url(#cp3)"/>
<path d="M2734 149.700 H2755.200 L2742.500 188.700 H2726.500 C2720 188.700 2717.500 185 2719 180 L2725 158 C2726.800 152 2729.500 149.700 2734 149.700 Z" fill="url(#cp1)"/>
<path d="M2743.200 202.100 C2739 202.100 2736.500 200.500 2735 196.500 C2733.500 192.500 2732.500 190 2729.500 188.600 H2748.200 Z" fill="url(#cp4)"/>
<path d="M2757.700 162.900 H2772 C2778 162.900 2780.500 166.500 2779 171.500 L2772.500 194 C2770.800 199.800 2768 202.100 2763.500 202.100 H2743 Z" fill="url(#cp2)"/>
<path d="M2904 197 H2893.500 a5 5 0 0 1 -5 -5 V158.500 a5 5 0 0 1 5 -5 H2911.500 L2923 165 V172" stroke="#3d6fe0" stroke-width="2.6" fill="none" stroke-linecap="round" stroke-linejoin="round" />
<path d="M2911.500 153.500 V160 a5 5 0 0 0 5 5 H2923" stroke="#3d6fe0" stroke-width="2.4" fill="none" stroke-linecap="round" stroke-linejoin="round" />
<path d="M2896 181.5 C2901 179 2905 171 2904.5 166 C2904 163.5 2901.500 164 2902 167 C2903 172.500 2908 178 2914.500 179.500 C2917 180 2917 177.500 2914 177.500 C2908 177.500 2900 179.500 2896 181.500 Z" stroke="#3d6fe0" stroke-width="1.8" fill="none" stroke-linecap="round" stroke-linejoin="round" />
<g transform="rotate(-45 2922 191.500)" fill="none" stroke="#3d6fe0" stroke-width="2.8"><rect x="2905" y="187" width="18" height="9" rx="4.5"/><rect x="2921" y="187" width="18" height="9" rx="4.5"/></g>
<path d="M153.200 298.800 H166.800 L160 288.600 Z M153.200 311.200 H166.800 L160 321.600 Z" fill="#6e6e6e"/>
<path d="M201.400 300.200 L220.600 319 M220.600 300.200 L201.400 319" stroke="#cecece" stroke-width="4.4" fill="none" stroke-linecap="butt" stroke-linejoin="round" />
<path d="M257.500 309 L266.200 317.600 L282 300.500" stroke="#cecece" stroke-width="4.4" fill="none" stroke-linecap="butt" stroke-linejoin="miter"  />
<path d="M2993.500 301.500 H3006.500 L3000 312.500 Z" fill="#6e6e6e"/>
<path d="M43.500 1691 V1710.500 L30 1700.700 Z" fill="#bfbfbf"/><path d="M76.500 1691 V1710.500 L90.500 1700.700 Z" fill="#b0b0b0"/>
<path d="M604 1698.700 H624 M614 1688.700 V1708.700" stroke="#4c4c4c" stroke-width="3.2" fill="none" stroke-linecap="butt" stroke-linejoin="round" />
<circle cx="178" cy="1744" r="4.800" fill="none" stroke="#5a5a5a" stroke-width="2.2"/>
<path d="M163.500 1745.500 C166 1752 171 1753.500 178 1753.500 C185 1753.500 189.500 1752 191.500 1745.500 M172.500 1753.500 C173 1760 172 1764 168.500 1767 C166 1769.500 168 1772 171 1770.500 C173 1769.500 174.500 1767 175.500 1765" stroke="#5a5a5a" stroke-width="2.2" fill="none" stroke-linecap="round" stroke-linejoin="round" />
<circle cx="184.500" cy="1763" r="8.300" fill="#4e4e4e"/>
<text x="184.5" y="1768" font-size="14" fill="#fff" font-weight="bold" text-anchor="middle"  xml:space="preserve">?</text>
<rect x="2407.500" y="1740" width="28.500" height="28" rx="4.500" fill="#3c3c3c"/>
<path d="M2417 1740 V1768 M2426.500 1740 V1768 M2407.500 1749.300 H2436 M2407.500 1758.700 H2436" stroke="#b1b1b1" stroke-width="1.8" fill="none" stroke-linecap="butt" stroke-linejoin="round" />
<path d="M2497 1739.200 H2489 a4 4 0 0 0 -4 4 V1764.500 a4 4 0 0 0 4 4 H2503 a4 4 0 0 0 4 -4 V1749.200 Z" stroke="#5a5a5a" stroke-width="2.4" fill="none" stroke-linecap="round" stroke-linejoin="round" />
<path d="M2497 1739.200 V1745.500 a3.500 3.500 0 0 0 3.500 3.500 H2507" stroke="#5a5a5a" stroke-width="2.2" fill="none" stroke-linecap="round" stroke-linejoin="round" />
<rect x="2489.500" y="1754" width="13" height="10" rx="1.500" fill="none" stroke="#5a5a5a" stroke-width="2"/><path d="M2494 1754 V1764 M2494 1759 H2502.500" stroke="#5a5a5a" stroke-width="2"/>
<path d="M2557 1738.500 V1747.500 H2580 V1738.500 M2557 1770 V1761 H2580 V1770" stroke="#5a5a5a" stroke-width="2.4" fill="none" stroke-linecap="butt" stroke-linejoin="miter"  />
<path d="M2554 1754.200 H2583" stroke="#5a5a5a" stroke-width="2.2" stroke-dasharray="3.2 2.200"/>
<path d="M2618.500 1754 H2633" stroke="#6c6c6c" stroke-width="2.4" fill="none" stroke-linecap="butt" stroke-linejoin="round" />
<path d="M2862.500 1754 H2877.500 M2870 1746.500 V1761.500" stroke="#6c6c6c" stroke-width="2.4" fill="none" stroke-linecap="butt" stroke-linejoin="round" />
</svg>
</div></body></html>
